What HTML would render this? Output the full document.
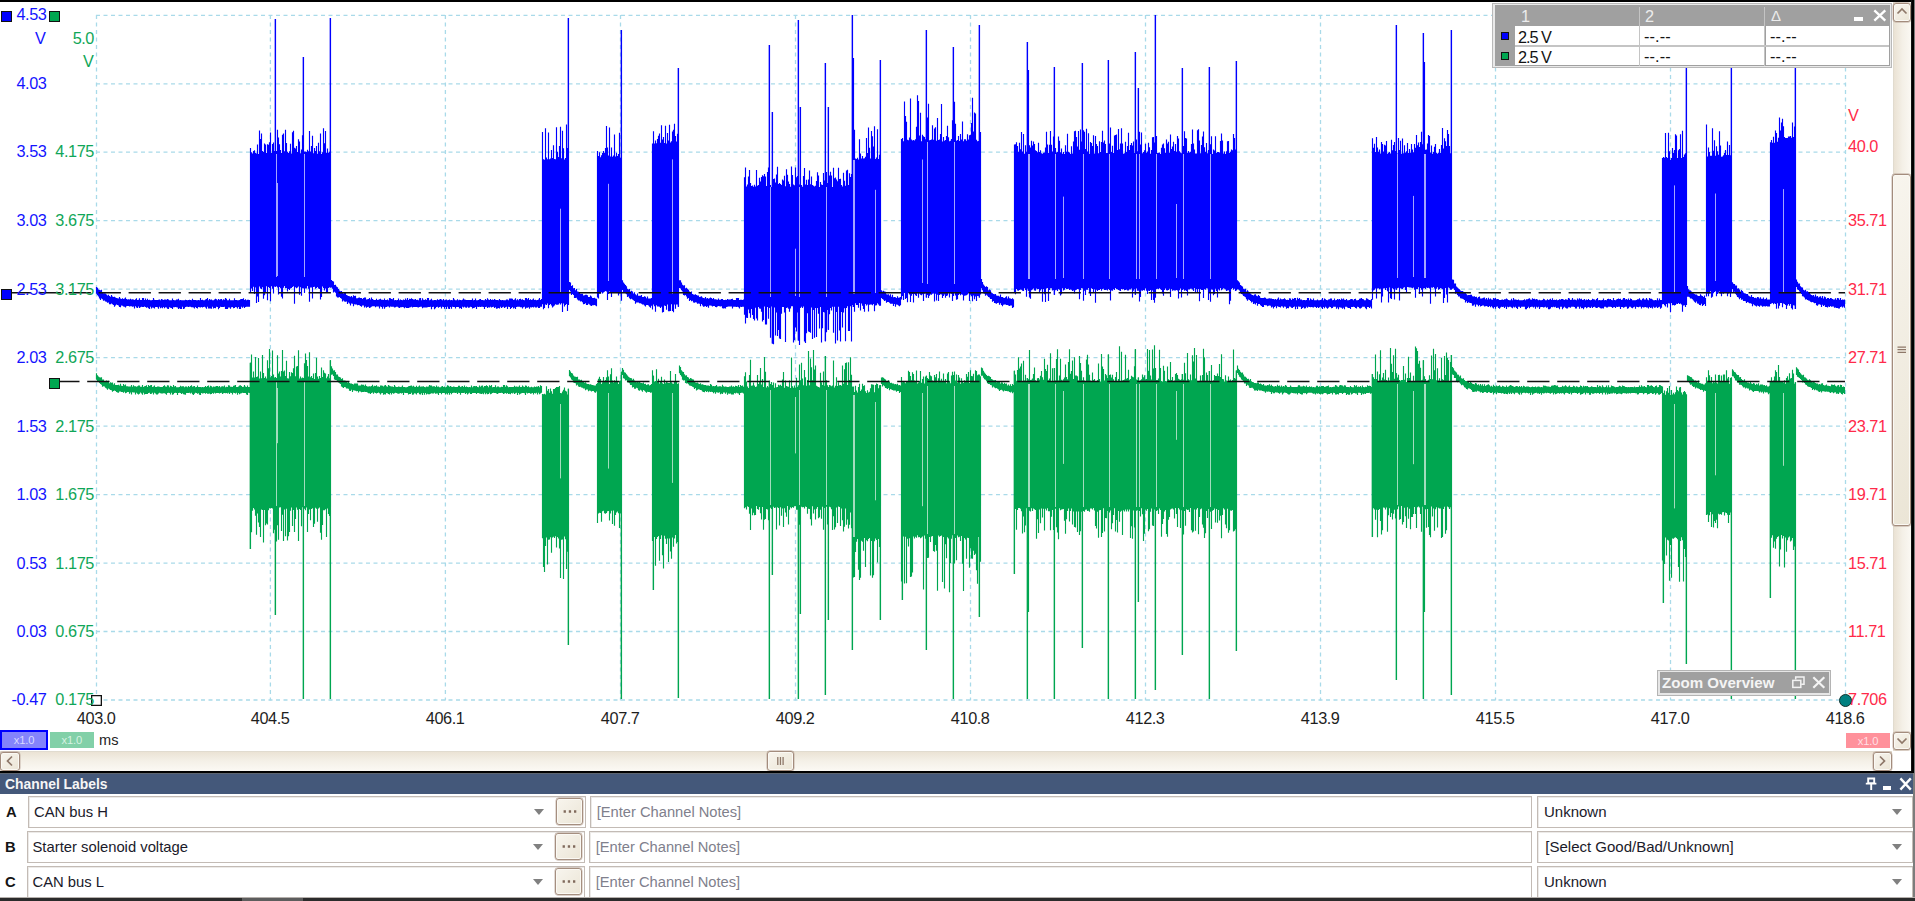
<!DOCTYPE html>
<html lang="en"><head><meta charset="utf-8"><title>PicoScope - CAN bus H / CAN bus L</title>
<style>
html,body{margin:0;padding:0;background:#fff;}
body{width:1915px;height:901px;position:relative;overflow:hidden;font-family:"Liberation Sans",sans-serif;font-size:15.5px;color:#1e1e1e;}
.a{position:absolute;}
.t{position:absolute;white-space:nowrap;line-height:18px;height:18px;font-size:16.3px;letter-spacing:-.42px;}
.bl{color:#1414ff;} .gr{color:#10a658;} .rd{color:#ff2a4a;}
.sb{position:absolute;box-sizing:border-box;border:1px solid #a38c7d;border-radius:3px;background:linear-gradient(135deg,#f8f5ee,#ebe5d6);box-shadow:inset 0 0 0 1px #fbf9f4,0 0 0 .4px #b9a699;}
.box{position:absolute;box-sizing:border-box;border:1px solid #c3bbb5;background:#fff;box-shadow:inset 1px 1px 0 #eceae8;}
.tri{position:absolute;width:0;height:0;border-left:5.5px solid transparent;border-right:5.5px solid transparent;border-top:6px solid #808080;}
.lbl{position:absolute;font-size:14.8px;line-height:20px;height:20px;white-space:nowrap;color:#1a1a2a;}
.note{color:#80808c;font-size:14.7px;}
.cell{position:absolute;background:#fff;height:18.5px;}
</style></head>
<body>
<svg class="a" style="left:0;top:0" width="1915" height="775" viewBox="0 0 1915 775">
<path d="M96 15.3H1845.5M96 83.8H1845.5M96 152.2H1845.5M96 220.7H1845.5M96 289.2H1845.5M96 357.7H1845.5M96 426.1H1845.5M96 494.6H1845.5M96 563.1H1845.5M96 631.5H1845.5M96 700.0H1845.5" stroke="#a9dae9" stroke-width="1.3" stroke-dasharray="4 3.5" fill="none"/>
<path d="M96.5 15V700.5M270.4 15V700.5M445.4 15V700.5M620.5 15V700.5M795.5 15V700.5M970.5 15V700.5M1145.5 15V700.5M1320.5 15V700.5M1495.5 15V700.5M1670.5 15V700.5M1845.5 15V700.5" stroke="#a9dae9" stroke-width="1.3" stroke-dasharray="4 3.5" fill="none"/>
<path d="M96.5 373.3V379.8M97.5 375.3V381.5M98.5 376.4V382.0M99.5 377.3V383.0M100.5 377.4V384.1M101.5 377.3V384.7M102.5 379.5V386.7M103.5 379.4V386.2M104.5 380.9V386.6M105.5 381.2V387.8M106.5 380.6V388.6M107.5 381.8V389.7M108.5 380.7V388.5M109.5 383.2V389.3M110.5 382.3V389.9M111.5 382.8V390.3M112.5 382.6V391.7M113.5 384.4V391.1M114.5 383.2V390.4M115.5 384.9V391.0M116.5 385.1V392.0M117.5 384.9V392.5M118.5 384.8V392.8M119.5 385.4V391.6M120.5 383.7V391.4M121.5 385.7V392.0M122.5 386.0V392.0M123.5 384.1V392.7M124.5 385.2V391.8M125.5 384.6V393.3M126.5 386.3V392.8M127.5 386.3V392.1M128.5 386.5V392.1M129.5 386.6V393.8M130.5 386.5V392.5M131.5 385.1V394.4M132.5 386.7V392.3M133.5 385.2V392.4M134.5 386.2V392.4M135.5 386.2V394.5M136.5 386.7V392.8M137.5 386.3V393.8M138.5 385.5V394.6M139.5 385.5V393.7M140.5 386.7V392.6M141.5 386.8V393.6M142.5 385.1V394.7M143.5 386.9V392.7M144.5 386.2V394.4M145.5 386.1V394.1M146.5 385.2V394.0M147.5 387.0V394.0M148.5 385.0V393.0M149.5 385.9V392.8M150.5 385.3V394.1M151.5 385.0V393.7M152.5 387.1V392.7M153.5 386.5V394.6M154.5 385.6V392.8M155.5 387.0V393.5M156.5 387.1V394.6M157.5 386.4V394.5M158.5 386.6V393.4M159.5 386.7V392.8M160.5 387.1V393.3M161.5 386.9V393.4M162.5 387.1V393.5M163.5 385.9V393.3M164.5 385.3V393.2M165.5 386.6V393.8M166.5 386.7V394.7M167.5 385.2V392.9M168.5 385.6V392.8M169.5 387.2V392.9M170.5 385.8V394.6M171.5 386.2V392.8M172.5 387.1V394.8M173.5 385.0V394.3M174.5 386.6V393.0M175.5 386.0V392.8M176.5 387.2V393.0M177.5 387.2V394.9M178.5 387.2V392.9M179.5 387.0V392.8M180.5 385.7V392.9M181.5 386.5V393.9M182.5 386.2V393.2M183.5 386.3V394.2M184.5 387.2V394.4M185.5 386.5V394.7M186.5 386.6V392.9M187.5 387.2V392.9M188.5 385.9V393.0M189.5 386.9V392.8M190.5 386.0V393.5M191.5 385.3V392.8M192.5 386.7V394.3M193.5 386.2V394.9M194.5 386.1V393.7M195.5 387.2V392.8M196.5 387.1V392.9M197.5 385.5V393.8M198.5 387.0V393.3M199.5 387.0V394.8M200.5 387.1V394.9M201.5 387.2V393.1M202.5 387.1V393.4M203.5 387.2V393.2M204.5 387.0V392.9M205.5 386.0V393.8M206.5 386.9V393.0M207.5 386.0V393.7M208.5 385.4V393.7M209.5 387.2V393.4M210.5 385.8V394.3M211.5 386.2V393.9M212.5 387.2V393.1M213.5 386.5V393.7M214.5 386.7V392.8M215.5 386.6V393.4M216.5 386.0V392.9M217.5 386.0V392.9M218.5 386.7V393.1M219.5 385.9V393.6M220.5 387.2V392.9M221.5 386.5V392.8M222.5 386.2V393.9M223.5 386.6V393.3M224.5 385.4V392.9M225.5 387.2V393.3M226.5 386.8V393.0M227.5 387.1V393.5M228.5 385.2V392.8M229.5 385.5V393.9M230.5 386.7V392.8M231.5 386.8V393.0M232.5 387.0V394.4M233.5 385.7V392.8M234.5 385.4V393.0M235.5 385.0V393.6M236.5 387.0V392.8M237.5 387.0V394.7M238.5 386.6V392.9M239.5 385.5V394.3M240.5 385.3V393.5M241.5 386.0V393.2M242.5 387.0V392.8M243.5 386.7V393.1M244.5 385.1V392.9M245.5 386.5V393.1M246.5 387.1V394.6M247.5 385.4V395.0M248.5 387.1V392.8M249.5 387.1V392.9M250.5 362.8V549.0M251.5 354.6V532.2M252.5 377.6V510.8M253.5 371.6V508.0M254.5 377.4V509.6M255.5 356.9V515.7M256.5 376.9V534.7M257.5 376.6V513.4M258.5 358.0V522.5M259.5 378.5V526.9M260.5 371.5V537.1M261.5 378.3V509.5M262.5 354.9V510.0M263.5 372.9V542.6M264.5 377.9V510.0M265.5 376.5V525.2M266.5 378.5V523.5M267.5 360.3V524.5M268.5 368.3V510.2M269.5 349.1V508.2M270.5 377.3V508.6M271.5 376.1V508.1M272.5 350.4V508.6M273.5 374.5V533.2M274.5 377.7V529.7M275.5 377.1V615.0M276.5 378.0V541.5M277.5 355.3V525.2M278.5 373.6V539.8M279.5 371.5V507.4M280.5 376.5V507.2M281.5 371.0V531.1M282.5 350.1V514.8M283.5 371.4V541.0M284.5 370.6V509.4M285.5 376.0V536.2M286.5 360.7V508.7M287.5 378.2V540.4M288.5 378.5V536.2M289.5 372.1V531.9M290.5 376.2V510.7M291.5 372.3V507.4M292.5 372.9V525.9M293.5 368.3V510.0M294.5 355.7V532.1M295.5 376.3V519.0M296.5 366.4V507.6M297.5 365.9V509.8M298.5 350.2V540.9M299.5 378.4V509.0M300.5 376.6V509.9M301.5 378.3V526.2M302.5 377.5V507.2M303.5 377.9V699.0M304.5 363.3V508.7M305.5 353.4V510.2M306.5 360.1V507.5M307.5 366.0V532.0M308.5 376.4V513.9M309.5 352.2V509.4M310.5 377.3V520.2M311.5 376.0V508.9M312.5 378.0V508.3M313.5 373.4V527.1M314.5 378.9V523.7M315.5 373.0V507.8M316.5 357.7V508.8M317.5 376.6V521.8M318.5 378.7V508.5M319.5 376.0V507.5M320.5 378.1V532.8M321.5 367.4V539.7M322.5 377.1V525.1M323.5 370.2V510.3M324.5 372.7V510.3M325.5 373.5V509.2M326.5 378.3V537.0M327.5 376.5V508.5M328.5 374.1V514.1M329.5 378.3V516.0M330.5 360.2V699.0M331.5 366.3V374.8M332.5 368.5V374.6M333.5 370.4V376.1M334.5 370.2V379.4M335.5 371.9V380.0M336.5 374.5V380.2M337.5 374.6V381.4M338.5 376.6V382.4M339.5 377.0V383.2M340.5 377.4V384.0M341.5 379.1V386.6M342.5 378.2V387.2M343.5 380.5V388.0M344.5 380.6V386.9M345.5 380.7V387.2M346.5 381.0V388.4M347.5 382.4V388.5M348.5 381.4V388.8M349.5 383.1V390.7M350.5 383.6V391.0M351.5 383.5V389.7M352.5 383.9V392.0M353.5 384.5V390.3M354.5 383.6V390.5M355.5 383.5V390.8M356.5 383.6V391.3M357.5 383.5V391.0M358.5 385.4V392.4M359.5 385.6V391.2M360.5 385.6V391.5M361.5 384.4V392.2M362.5 384.8V392.0M363.5 384.7V392.0M364.5 385.7V391.8M365.5 384.6V392.0M366.5 386.1V392.0M367.5 386.4V392.6M368.5 386.5V393.2M369.5 386.3V393.3M370.5 386.6V393.9M371.5 386.1V392.9M372.5 384.7V392.4M373.5 386.6V393.8M374.5 385.7V392.5M375.5 386.1V393.0M376.5 385.2V393.6M377.5 386.4V393.0M378.5 386.6V392.6M379.5 386.9V393.3M380.5 385.5V394.5M381.5 385.4V393.2M382.5 385.7V392.9M383.5 386.6V394.7M384.5 385.6V394.2M385.5 385.0V394.6M386.5 386.2V393.0M387.5 386.7V393.2M388.5 385.0V394.0M389.5 385.7V394.4M390.5 386.2V392.9M391.5 386.5V394.6M392.5 386.5V393.1M393.5 386.9V393.7M394.5 385.1V393.3M395.5 386.5V392.8M396.5 387.0V393.1M397.5 387.1V393.4M398.5 386.4V393.7M399.5 386.7V393.4M400.5 387.0V392.9M401.5 386.8V393.5M402.5 385.5V392.9M403.5 387.0V394.9M404.5 387.1V392.8M405.5 387.2V393.1M406.5 387.2V392.9M407.5 387.1V393.0M408.5 386.3V394.4M409.5 386.0V394.0M410.5 385.8V393.9M411.5 385.5V392.8M412.5 386.6V394.8M413.5 385.8V394.5M414.5 386.7V393.3M415.5 386.9V393.5M416.5 385.8V394.4M417.5 387.1V393.0M418.5 386.4V392.8M419.5 385.6V394.3M420.5 386.8V394.6M421.5 386.5V393.3M422.5 386.6V395.0M423.5 386.2V393.1M424.5 386.9V394.8M425.5 387.2V393.1M426.5 386.5V394.5M427.5 386.8V393.7M428.5 386.6V394.3M429.5 385.1V394.3M430.5 385.4V393.8M431.5 385.5V393.2M432.5 386.6V393.4M433.5 386.3V393.6M434.5 386.3V392.8M435.5 387.0V393.8M436.5 385.6V393.6M437.5 386.7V393.5M438.5 386.6V395.0M439.5 387.2V392.9M440.5 387.2V392.9M441.5 386.4V394.2M442.5 385.9V393.0M443.5 387.1V393.0M444.5 386.5V393.1M445.5 387.2V394.5M446.5 386.8V393.6M447.5 385.3V394.4M448.5 385.7V393.0M449.5 386.7V394.8M450.5 386.1V392.9M451.5 386.7V394.2M452.5 386.9V392.9M453.5 386.5V392.8M454.5 386.8V392.8M455.5 386.9V392.9M456.5 387.1V392.8M457.5 387.1V393.9M458.5 385.7V392.8M459.5 385.8V392.9M460.5 386.9V394.8M461.5 386.6V392.9M462.5 386.1V392.9M463.5 386.9V392.9M464.5 385.5V392.8M465.5 387.0V394.1M466.5 386.5V393.0M467.5 387.1V394.4M468.5 387.2V393.5M469.5 387.0V392.8M470.5 387.2V393.9M471.5 385.4V394.1M472.5 387.2V393.0M473.5 386.2V393.1M474.5 386.1V392.9M475.5 386.3V392.9M476.5 386.0V393.9M477.5 387.1V392.9M478.5 387.2V393.0M479.5 385.6V393.5M480.5 386.8V393.8M481.5 385.7V394.1M482.5 385.6V393.6M483.5 387.2V394.2M484.5 386.0V392.8M485.5 386.0V394.3M486.5 385.2V393.2M487.5 386.0V394.3M488.5 387.2V393.9M489.5 385.3V392.8M490.5 386.1V394.2M491.5 385.1V393.7M492.5 387.2V393.1M493.5 387.0V392.8M494.5 387.1V392.9M495.5 385.3V393.1M496.5 387.2V393.5M497.5 386.5V394.1M498.5 386.4V393.3M499.5 387.2V393.0M500.5 387.2V393.0M501.5 386.8V392.8M502.5 386.9V392.9M503.5 385.0V394.0M504.5 385.1V393.5M505.5 386.8V392.9M506.5 385.3V393.7M507.5 386.3V392.9M508.5 387.2V394.1M509.5 387.1V393.7M510.5 387.1V394.2M511.5 387.0V392.9M512.5 386.9V393.5M513.5 387.1V392.8M514.5 385.7V393.9M515.5 386.7V393.3M516.5 386.5V392.8M517.5 386.8V394.9M518.5 386.8V392.9M519.5 385.6V394.4M520.5 387.0V393.8M521.5 386.9V393.2M522.5 385.4V392.9M523.5 386.5V393.1M524.5 387.0V393.3M525.5 385.6V394.9M526.5 385.8V392.8M527.5 387.0V393.5M528.5 386.3V393.0M529.5 387.2V392.9M530.5 387.2V393.8M531.5 386.8V393.4M532.5 387.2V392.9M533.5 387.2V394.4M534.5 386.6V392.9M535.5 387.1V393.5M536.5 386.4V392.8M537.5 386.8V394.4M538.5 385.9V392.8M539.5 387.2V394.3M540.5 385.2V393.5M541.5 385.9V392.8M542.5 393.9V538.3M543.5 394.2V567.0M544.5 393.7V572.1M545.5 394.4V546.1M546.5 386.2V537.6M547.5 390.7V564.6M548.5 389.1V539.8M549.5 392.8V539.5M550.5 388.5V537.3M551.5 391.2V552.7M552.5 393.7V537.4M553.5 389.1V536.8M554.5 389.1V538.1M555.5 387.9V536.2M556.5 387.1V547.6M557.5 387.1V537.0M558.5 387.0V538.6M559.5 386.0V548.6M560.5 393.0V578.0M561.5 393.2V539.8M562.5 391.6V539.5M563.5 389.7V578.9M564.5 387.4V536.6M565.5 390.8V539.2M566.5 391.4V569.1M567.5 394.6V551.7M568.5 388.8V645.0M569.5 370.0V376.2M570.5 371.4V377.6M571.5 373.0V379.4M572.5 373.4V380.2M573.5 375.4V382.5M574.5 376.4V383.1M575.5 376.7V383.2M576.5 377.0V385.4M577.5 376.8V384.7M578.5 379.4V386.4M579.5 379.5V387.0M580.5 380.3V386.7M581.5 379.7V387.6M582.5 381.5V387.7M583.5 381.8V388.6M584.5 382.7V388.5M585.5 382.3V390.3M586.5 383.6V389.5M587.5 383.9V389.5M588.5 383.9V391.2M589.5 384.4V390.4M590.5 384.2V390.8M591.5 384.8V391.5M592.5 385.0V391.0M593.5 385.3V391.0M594.5 385.4V392.2M595.5 385.5V392.7M596.5 384.1V391.4M597.5 382.9V522.9M598.5 378.7V513.6M599.5 376.7V512.7M600.5 379.1V513.0M601.5 384.0V521.8M602.5 382.2V511.2M603.5 377.1V510.8M604.5 381.9V513.2M605.5 380.0V513.7M606.5 377.2V513.1M607.5 370.2V511.3M608.5 376.6V510.9M609.5 384.0V520.6M610.5 374.2V513.6M611.5 368.2V510.7M612.5 380.4V524.1M613.5 382.6V510.4M614.5 380.2V525.8M615.5 381.7V515.0M616.5 376.4V512.4M617.5 381.0V511.6M618.5 383.9V513.2M619.5 381.3V528.0M620.5 380.4V513.3M621.5 371.8V699.0M622.5 368.1V375.1M623.5 369.7V378.3M624.5 372.2V378.7M625.5 372.7V380.6M626.5 374.2V380.3M627.5 375.4V382.2M628.5 376.7V382.6M629.5 377.5V383.3M630.5 378.1V385.1M631.5 378.2V384.9M632.5 379.8V387.6M633.5 378.8V387.0M634.5 380.6V388.8M635.5 381.6V388.8M636.5 382.2V387.8M637.5 381.2V388.3M638.5 382.3V390.2M639.5 381.5V390.7M640.5 382.8V389.7M641.5 383.0V390.5M642.5 383.3V391.7M643.5 382.4V390.1M644.5 384.1V390.8M645.5 383.8V391.8M646.5 385.1V392.8M647.5 384.6V391.7M648.5 384.3V392.0M649.5 385.5V391.9M650.5 384.9V392.8M651.5 383.9V392.6M652.5 370.3V541.1M653.5 375.7V590.0M654.5 381.5V536.9M655.5 381.1V565.7M656.5 369.3V538.9M657.5 381.6V537.1M658.5 378.7V536.1M659.5 383.5V560.8M660.5 381.3V538.9M661.5 376.7V535.2M662.5 383.2V555.2M663.5 384.0V568.5M664.5 379.6V535.8M665.5 383.2V538.7M666.5 381.5V544.1M667.5 382.4V538.6M668.5 383.1V562.0M669.5 383.1V538.6M670.5 370.9V551.4M671.5 382.2V558.7M672.5 383.4V537.5M673.5 383.8V546.7M674.5 381.3V538.6M675.5 374.1V535.0M676.5 381.3V543.6M677.5 383.9V542.0M678.5 383.4V698.0M679.5 365.6V373.2M680.5 367.0V375.0M681.5 370.3V376.4M682.5 371.5V379.7M683.5 372.0V380.4M684.5 374.3V380.2M685.5 375.5V382.9M686.5 375.3V383.5M687.5 376.9V383.2M688.5 377.5V384.3M689.5 379.1V385.4M690.5 377.9V385.8M691.5 378.4V386.1M692.5 379.3V386.7M693.5 379.4V387.3M694.5 381.0V388.9M695.5 382.4V388.1M696.5 382.8V390.6M697.5 382.4V389.7M698.5 383.6V389.3M699.5 383.9V389.6M700.5 383.2V390.0M701.5 384.5V390.3M702.5 384.3V391.5M703.5 384.7V392.1M704.5 385.0V392.3M705.5 385.1V390.9M706.5 385.4V392.0M707.5 385.6V391.3M708.5 385.4V392.3M709.5 385.9V391.5M710.5 384.0V391.9M711.5 384.7V391.8M712.5 386.2V391.9M713.5 386.0V393.2M714.5 386.3V392.3M715.5 386.0V393.7M716.5 385.0V392.2M717.5 386.5V392.6M718.5 386.6V392.7M719.5 386.2V392.3M720.5 386.2V394.2M721.5 386.7V393.6M722.5 384.8V394.0M723.5 386.2V392.6M724.5 386.8V392.5M725.5 386.4V393.7M726.5 386.7V392.6M727.5 386.9V394.7M728.5 387.0V393.5M729.5 386.5V393.8M730.5 386.5V393.4M731.5 385.6V394.6M732.5 386.7V394.4M733.5 386.3V394.4M734.5 387.1V393.1M735.5 385.8V393.4M736.5 386.1V392.7M737.5 386.6V393.3M738.5 384.9V393.6M739.5 387.0V394.9M740.5 385.1V392.9M741.5 386.1V392.7M742.5 385.6V392.7M743.5 386.7V393.4M744.5 376.3V508.3M745.5 372.2V507.2M746.5 381.4V509.6M747.5 386.6V506.3M748.5 387.9V506.9M749.5 374.9V513.8M750.5 359.8V529.9M751.5 385.8V508.4M752.5 385.5V515.3M753.5 382.6V512.7M754.5 385.6V515.3M755.5 387.1V515.0M756.5 386.6V506.1M757.5 374.9V509.1M758.5 384.1V509.7M759.5 381.8V507.0M760.5 367.9V513.3M761.5 384.6V519.6M762.5 379.0V507.0M763.5 387.1V529.7M764.5 356.9V519.7M765.5 371.7V519.1M766.5 387.4V508.9M767.5 386.0V509.4M768.5 387.3V520.3M769.5 380.8V699.0M770.5 384.1V507.7M771.5 382.1V508.9M772.5 385.3V575.0M773.5 382.4V506.7M774.5 387.7V508.0M775.5 383.2V507.4M776.5 387.2V529.6M777.5 386.9V507.3M778.5 384.7V507.9M779.5 385.4V525.5M780.5 384.7V507.2M781.5 386.0V515.8M782.5 379.5V508.6M783.5 372.0V527.1M784.5 387.7V508.2M785.5 380.4V512.6M786.5 386.1V516.8M787.5 386.6V506.1M788.5 386.7V524.5M789.5 380.5V509.8M790.5 388.0V507.3M791.5 357.6V508.3M792.5 386.3V507.0M793.5 387.8V507.7M794.5 385.4V506.2M795.5 387.6V506.1M796.5 377.8V509.7M797.5 386.9V509.7M798.5 385.5V699.0M799.5 364.6V524.8M800.5 380.4V614.0M801.5 362.8V506.8M802.5 378.4V507.3M803.5 385.3V507.1M804.5 370.1V508.6M805.5 377.2V506.6M806.5 385.7V507.0M807.5 379.9V513.8M808.5 351.1V508.8M809.5 385.3V508.9M810.5 358.5V519.3M811.5 367.2V525.4M812.5 380.3V506.2M813.5 349.9V513.6M814.5 369.6V509.5M815.5 365.5V519.4M816.5 385.8V508.8M817.5 386.4V506.9M818.5 386.9V518.3M819.5 387.4V517.3M820.5 372.7V509.7M821.5 382.2V518.8M822.5 385.0V506.8M823.5 371.5V529.7M824.5 385.8V507.9M825.5 356.0V695.0M826.5 380.2V506.7M827.5 385.3V524.6M828.5 387.0V620.0M829.5 385.1V506.7M830.5 385.5V507.2M831.5 386.3V509.3M832.5 385.5V529.9M833.5 360.4V516.3M834.5 387.4V529.4M835.5 385.8V527.2M836.5 377.3V507.4M837.5 386.1V523.1M838.5 382.3V506.5M839.5 385.2V506.9M840.5 385.1V526.1M841.5 385.7V508.6M842.5 365.6V520.2M843.5 383.7V531.6M844.5 369.2V526.8M845.5 363.0V508.5M846.5 362.4V524.8M847.5 385.1V519.4M848.5 362.3V528.4M849.5 380.0V524.8M850.5 357.3V512.6M851.5 374.8V528.2M852.5 386.7V650.0M853.5 386.5V577.4M854.5 391.9V577.0M855.5 385.8V552.0M856.5 390.4V541.8M857.5 392.5V539.1M858.5 387.0V569.7M859.5 383.8V580.0M860.5 391.1V577.8M861.5 389.5V540.8M862.5 383.8V541.7M863.5 386.0V550.7M864.5 385.3V538.1M865.5 391.2V567.1M866.5 392.9V540.3M867.5 390.3V541.2M868.5 392.5V539.0M869.5 391.7V538.1M870.5 388.2V575.5M871.5 384.3V541.1M872.5 384.6V577.7M873.5 384.7V575.2M874.5 392.3V541.3M875.5 385.1V538.5M876.5 383.4V539.9M877.5 383.9V562.6M878.5 388.3V539.1M879.5 385.3V546.9M880.5 384.9V620.0M881.5 377.6V384.0M882.5 377.2V386.4M883.5 377.7V385.3M884.5 378.7V386.3M885.5 379.4V388.0M886.5 381.4V388.3M887.5 381.9V389.0M888.5 380.3V388.1M889.5 382.1V390.2M890.5 382.9V388.9M891.5 382.8V389.6M892.5 383.6V389.9M893.5 383.4V390.4M894.5 384.2V390.6M895.5 384.0V390.4M896.5 384.6V391.8M897.5 383.8V391.1M898.5 385.3V390.9M899.5 385.1V392.9M900.5 385.6V391.9M901.5 377.1V581.6M902.5 382.6V600.0M903.5 381.9V536.4M904.5 382.2V583.4M905.5 383.3V536.8M906.5 382.0V583.2M907.5 381.3V538.8M908.5 370.8V546.5M909.5 371.9V538.2M910.5 375.9V577.0M911.5 380.2V576.4M912.5 372.2V572.6M913.5 374.0V536.6M914.5 380.5V538.4M915.5 381.0V536.8M916.5 370.6V537.7M917.5 383.5V535.2M918.5 382.4V537.3M919.5 381.1V536.9M920.5 371.1V538.2M921.5 382.7V537.6M922.5 379.1V536.5M923.5 376.6V589.4M924.5 383.6V535.5M925.5 376.8V538.7M926.5 375.8V650.0M927.5 377.9V558.1M928.5 379.0V557.8M929.5 372.0V537.1M930.5 375.6V541.9M931.5 376.2V536.4M932.5 380.5V536.0M933.5 382.1V551.1M934.5 375.1V551.8M935.5 377.3V544.9M936.5 373.9V550.7M937.5 382.2V590.7M938.5 378.2V535.4M939.5 371.5V536.8M940.5 380.7V536.1M941.5 378.7V535.4M942.5 381.7V582.0M943.5 373.5V536.9M944.5 381.0V588.6M945.5 379.0V544.3M946.5 383.2V558.3M947.5 373.5V537.2M948.5 372.1V538.5M949.5 381.3V592.3M950.5 383.2V563.3M951.5 375.5V538.8M952.5 371.7V535.3M953.5 374.9V699.0M954.5 371.4V563.4M955.5 380.6V538.0M956.5 374.4V560.3M957.5 382.4V535.4M958.5 375.1V537.2M959.5 377.4V536.7M960.5 383.8V541.0M961.5 378.3V536.1M962.5 381.3V563.7M963.5 383.0V590.9M964.5 380.2V537.9M965.5 381.7V539.6M966.5 374.1V558.7M967.5 376.8V537.8M968.5 371.9V537.9M969.5 382.9V567.7M970.5 370.3V548.3M971.5 375.9V558.5M972.5 376.2V558.8M973.5 373.8V550.7M974.5 381.3V555.0M975.5 370.3V553.7M976.5 371.1V570.3M977.5 375.2V583.7M978.5 374.4V537.0M979.5 374.8V617.0M980.5 376.2V561.7M981.5 367.5V375.8M982.5 368.3V375.7M983.5 370.7V377.7M984.5 372.4V379.2M985.5 373.7V379.8M986.5 375.0V381.3M987.5 376.1V383.2M988.5 375.8V383.9M989.5 376.3V383.9M990.5 377.1V384.9M991.5 379.0V385.2M992.5 379.5V387.4M993.5 380.3V386.4M994.5 380.2V387.5M995.5 379.9V388.3M996.5 382.3V388.1M997.5 382.0V388.8M998.5 382.0V389.4M999.5 381.6V391.0M1000.5 383.5V389.9M1001.5 382.3V389.8M1002.5 382.6V390.4M1003.5 384.0V391.6M1004.5 382.7V390.5M1005.5 383.8V391.1M1006.5 383.5V391.0M1007.5 385.4V391.3M1008.5 384.4V391.2M1009.5 385.7V392.0M1010.5 384.3V392.5M1011.5 386.0V391.7M1012.5 384.0V393.3M1013.5 384.9V392.3M1014.5 370.7V574.0M1015.5 374.6V509.0M1016.5 380.7V529.7M1017.5 370.0V510.0M1018.5 357.2V508.1M1019.5 368.4V508.1M1020.5 366.5V508.8M1021.5 363.5V511.3M1022.5 380.9V533.4M1023.5 360.8V516.6M1024.5 380.6V532.3M1025.5 374.8V525.5M1026.5 381.6V508.2M1027.5 378.0V699.0M1028.5 379.5V612.0M1029.5 349.9V510.7M1030.5 380.0V511.6M1031.5 379.8V508.2M1032.5 378.4V511.1M1033.5 374.0V508.6M1034.5 367.5V509.3M1035.5 380.2V510.1M1036.5 381.0V538.7M1037.5 378.2V519.3M1038.5 378.0V533.1M1039.5 379.6V509.4M1040.5 375.7V523.2M1041.5 371.0V508.5M1042.5 377.3V517.5M1043.5 379.8V508.8M1044.5 358.8V530.5M1045.5 368.9V508.7M1046.5 371.0V510.6M1047.5 364.8V508.3M1048.5 380.2V511.3M1049.5 378.6V511.2M1050.5 353.3V530.2M1051.5 381.8V516.7M1052.5 368.2V510.1M1053.5 380.9V530.0M1054.5 368.0V699.0M1055.5 380.4V508.7M1056.5 359.1V527.3M1057.5 349.2V532.6M1058.5 380.5V539.2M1059.5 375.5V508.3M1060.5 358.7V510.2M1061.5 379.7V509.5M1062.5 380.5V509.2M1063.5 379.2V509.0M1064.5 377.5V520.8M1065.5 364.4V533.7M1066.5 377.1V519.3M1067.5 379.2V511.1M1068.5 362.1V508.5M1069.5 349.3V521.4M1070.5 373.8V511.1M1071.5 371.1V508.5M1072.5 360.6V524.4M1073.5 379.1V511.4M1074.5 357.3V527.1M1075.5 375.5V527.6M1076.5 375.6V511.5M1077.5 376.3V532.1M1078.5 380.4V511.6M1079.5 356.0V535.1M1080.5 363.0V531.3M1081.5 370.8V511.7M1082.5 380.6V648.0M1083.5 377.3V511.1M1084.5 380.6V511.7M1085.5 381.2V509.8M1086.5 359.4V509.6M1087.5 354.7V510.9M1088.5 364.6V510.7M1089.5 374.7V511.7M1090.5 380.4V508.4M1091.5 381.9V508.4M1092.5 372.4V509.6M1093.5 380.1V508.1M1094.5 379.1V510.6M1095.5 381.9V525.9M1096.5 381.7V528.5M1097.5 380.1V511.8M1098.5 363.4V537.7M1099.5 379.0V510.3M1100.5 381.4V510.0M1101.5 354.1V536.9M1102.5 366.5V532.9M1103.5 368.9V508.3M1104.5 380.6V531.5M1105.5 373.9V517.9M1106.5 375.3V518.2M1107.5 377.9V511.1M1108.5 354.6V699.0M1109.5 375.1V512.5M1110.5 374.6V510.6M1111.5 377.6V529.2M1112.5 374.7V523.3M1113.5 379.3V515.1M1114.5 381.3V508.3M1115.5 376.9V531.5M1116.5 372.0V520.1M1117.5 381.2V532.6M1118.5 379.0V510.9M1119.5 346.2V521.8M1120.5 381.1V511.7M1121.5 351.8V510.7M1122.5 380.5V535.1M1123.5 380.1V510.2M1124.5 379.4V511.5M1125.5 354.8V509.5M1126.5 378.8V511.6M1127.5 377.9V509.6M1128.5 369.7V511.4M1129.5 379.8V509.4M1130.5 379.0V538.1M1131.5 375.8V526.2M1132.5 376.7V538.7M1133.5 377.3V510.6M1134.5 366.2V527.6M1135.5 349.2V699.0M1136.5 379.5V510.8M1137.5 379.9V510.2M1138.5 377.5V602.0M1139.5 380.7V511.0M1140.5 380.3V516.5M1141.5 379.2V508.3M1142.5 374.4V514.3M1143.5 377.3V541.1M1144.5 375.3V533.7M1145.5 379.3V509.7M1146.5 379.1V510.7M1147.5 348.9V509.1M1148.5 370.8V531.3M1149.5 349.9V529.3M1150.5 375.6V511.8M1151.5 379.6V508.4M1152.5 349.5V525.6M1153.5 368.4V525.9M1154.5 345.3V509.6M1155.5 367.9V690.0M1156.5 380.1V511.1M1157.5 379.9V510.3M1158.5 378.6V513.9M1159.5 349.7V508.5M1160.5 368.1V510.1M1161.5 381.1V536.8M1162.5 381.6V523.9M1163.5 365.7V519.0M1164.5 370.8V511.5M1165.5 381.1V509.9M1166.5 381.3V533.9M1167.5 366.5V536.8M1168.5 379.2V519.7M1169.5 380.3V516.9M1170.5 362.1V509.4M1171.5 380.1V508.7M1172.5 377.1V508.6M1173.5 381.5V509.5M1174.5 380.4V518.6M1175.5 374.1V508.0M1176.5 373.1V513.9M1177.5 375.1V527.0M1178.5 378.7V508.1M1179.5 379.6V509.5M1180.5 380.0V527.9M1181.5 379.2V510.2M1182.5 374.1V655.0M1183.5 379.8V534.4M1184.5 362.8V511.0M1185.5 373.3V525.8M1186.5 380.6V509.3M1187.5 353.1V510.1M1188.5 379.2V509.7M1189.5 380.3V511.9M1190.5 374.4V508.1M1191.5 380.2V530.2M1192.5 355.3V532.5M1193.5 361.4V531.6M1194.5 348.1V509.5M1195.5 378.4V530.7M1196.5 355.0V509.5M1197.5 380.7V508.1M1198.5 381.5V534.2M1199.5 380.7V517.0M1200.5 375.6V509.2M1201.5 380.8V508.5M1202.5 375.1V524.6M1203.5 348.7V527.7M1204.5 357.2V538.0M1205.5 380.7V533.3M1206.5 372.4V510.9M1207.5 374.9V518.1M1208.5 381.9V509.1M1209.5 371.0V699.0M1210.5 381.9V511.7M1211.5 365.0V529.0M1212.5 381.0V510.7M1213.5 380.2V510.1M1214.5 375.1V508.5M1215.5 376.1V522.5M1216.5 376.1V509.1M1217.5 373.4V522.8M1218.5 375.9V509.9M1219.5 364.0V520.4M1220.5 376.9V515.8M1221.5 354.3V538.2M1222.5 379.1V514.9M1223.5 379.2V508.3M1224.5 381.4V509.5M1225.5 375.3V524.5M1226.5 380.5V528.3M1227.5 381.8V508.8M1228.5 376.6V532.7M1229.5 380.4V530.2M1230.5 379.6V510.4M1231.5 381.5V510.7M1232.5 379.9V510.0M1233.5 349.5V531.4M1234.5 378.1V530.8M1235.5 378.8V529.3M1236.5 370.6V651.0M1237.5 365.4V373.1M1238.5 368.7V374.8M1239.5 370.1V376.8M1240.5 371.8V377.6M1241.5 372.7V379.4M1242.5 372.4V380.2M1243.5 374.5V381.5M1244.5 376.5V383.6M1245.5 376.8V383.6M1246.5 377.8V386.1M1247.5 379.0V384.8M1248.5 378.8V385.5M1249.5 380.5V387.7M1250.5 379.0V388.0M1251.5 381.3V387.7M1252.5 381.9V387.8M1253.5 382.2V388.8M1254.5 382.9V390.5M1255.5 383.1V390.4M1256.5 383.3V390.3M1257.5 382.6V391.1M1258.5 382.4V389.8M1259.5 383.9V390.5M1260.5 383.4V390.4M1261.5 384.3V390.5M1262.5 385.0V390.9M1263.5 383.9V391.2M1264.5 385.5V391.4M1265.5 385.6V392.8M1266.5 385.8V391.4M1267.5 384.9V391.7M1268.5 385.3V391.6M1269.5 384.2V391.8M1270.5 385.8V392.0M1271.5 384.7V394.0M1272.5 386.1V392.2M1273.5 386.4V393.3M1274.5 386.4V393.2M1275.5 386.1V392.2M1276.5 386.6V392.6M1277.5 384.8V392.4M1278.5 386.0V393.1M1279.5 385.5V393.7M1280.5 386.8V392.8M1281.5 385.5V392.5M1282.5 386.8V394.5M1283.5 386.1V393.2M1284.5 386.6V392.6M1285.5 385.1V392.7M1286.5 385.8V393.0M1287.5 386.9V393.7M1288.5 387.0V394.4M1289.5 387.0V394.5M1290.5 385.6V393.4M1291.5 386.7V392.7M1292.5 386.9V393.1M1293.5 386.9V393.3M1294.5 386.9V393.2M1295.5 387.1V393.6M1296.5 387.1V393.3M1297.5 386.8V394.5M1298.5 385.3V392.9M1299.5 385.3V393.3M1300.5 386.6V394.0M1301.5 386.5V394.5M1302.5 386.4V394.5M1303.5 385.7V392.9M1304.5 386.2V393.3M1305.5 386.8V392.9M1306.5 385.6V394.2M1307.5 387.1V393.2M1308.5 386.9V392.8M1309.5 386.3V392.8M1310.5 387.1V392.8M1311.5 386.6V392.8M1312.5 387.2V393.3M1313.5 387.1V393.7M1314.5 387.2V393.4M1315.5 387.2V394.5M1316.5 385.8V393.2M1317.5 385.7V393.8M1318.5 387.1V393.3M1319.5 386.2V394.0M1320.5 386.7V394.6M1321.5 385.9V393.7M1322.5 386.0V394.2M1323.5 386.1V393.5M1324.5 387.0V392.9M1325.5 386.7V393.0M1326.5 386.3V393.6M1327.5 386.1V394.6M1328.5 385.5V394.0M1329.5 387.2V393.9M1330.5 387.1V393.2M1331.5 387.2V392.9M1332.5 387.1V394.5M1333.5 386.8V392.8M1334.5 386.8V393.1M1335.5 385.0V394.4M1336.5 385.4V394.4M1337.5 386.6V393.9M1338.5 387.1V394.6M1339.5 385.6V393.0M1340.5 385.1V392.9M1341.5 385.3V393.0M1342.5 385.5V393.9M1343.5 386.5V392.9M1344.5 385.2V392.8M1345.5 385.6V392.9M1346.5 386.9V394.9M1347.5 387.0V394.1M1348.5 387.1V394.8M1349.5 387.2V394.7M1350.5 386.0V392.8M1351.5 387.1V394.5M1352.5 387.2V393.7M1353.5 387.2V392.9M1354.5 385.1V393.0M1355.5 386.3V393.6M1356.5 385.3V393.4M1357.5 387.1V394.9M1358.5 386.6V392.8M1359.5 387.0V392.8M1360.5 385.9V392.9M1361.5 387.2V394.9M1362.5 385.5V393.6M1363.5 387.1V394.2M1364.5 387.2V393.5M1365.5 386.8V394.1M1366.5 387.1V393.1M1367.5 385.3V393.0M1368.5 386.0V393.0M1369.5 385.7V392.8M1370.5 385.9V393.8M1371.5 387.1V393.3M1372.5 373.9V537.0M1373.5 377.3V508.3M1374.5 379.1V509.5M1375.5 354.4V519.7M1376.5 379.0V509.7M1377.5 371.6V537.3M1378.5 381.2V510.0M1379.5 374.3V509.1M1380.5 350.3V520.9M1381.5 380.3V534.4M1382.5 377.6V530.3M1383.5 372.9V507.6M1384.5 379.5V507.7M1385.5 369.7V509.5M1386.5 379.9V507.4M1387.5 380.7V531.8M1388.5 377.6V515.2M1389.5 380.6V508.2M1390.5 347.9V517.1M1391.5 363.7V513.1M1392.5 372.1V519.5M1393.5 355.2V513.7M1394.5 378.8V509.8M1395.5 348.8V518.4M1396.5 373.2V680.0M1397.5 377.4V509.2M1398.5 374.8V506.6M1399.5 380.1V519.7M1400.5 380.7V519.1M1401.5 379.9V506.1M1402.5 379.9V524.4M1403.5 366.0V522.1M1404.5 379.7V507.8M1405.5 373.5V516.2M1406.5 381.9V528.1M1407.5 378.1V507.3M1408.5 356.7V518.7M1409.5 377.9V508.8M1410.5 372.6V529.2M1411.5 381.4V516.9M1412.5 381.7V517.1M1413.5 375.7V514.1M1414.5 381.5V506.9M1415.5 346.4V514.1M1416.5 348.2V528.1M1417.5 351.0V507.3M1418.5 363.7V506.5M1419.5 360.7V507.6M1420.5 367.8V514.0M1421.5 380.2V531.8M1422.5 379.7V506.8M1423.5 360.2V699.0M1424.5 376.4V612.0M1425.5 379.0V509.2M1426.5 381.1V527.8M1427.5 380.8V509.1M1428.5 379.7V526.9M1429.5 375.3V535.1M1430.5 379.1V537.2M1431.5 355.5V506.6M1432.5 379.2V516.5M1433.5 348.7V508.6M1434.5 370.3V530.8M1435.5 354.1V509.2M1436.5 380.2V507.3M1437.5 368.2V527.5M1438.5 380.6V507.8M1439.5 378.3V508.5M1440.5 380.9V508.6M1441.5 357.9V537.9M1442.5 379.3V537.0M1443.5 380.0V508.9M1444.5 356.0V506.8M1445.5 374.9V533.8M1446.5 352.4V530.2M1447.5 358.1V506.4M1448.5 359.9V507.2M1449.5 381.6V508.9M1450.5 361.9V507.3M1451.5 355.1V695.0M1452.5 367.1V374.6M1453.5 368.3V375.1M1454.5 370.4V378.1M1455.5 371.4V378.1M1456.5 372.6V381.1M1457.5 374.5V382.2M1458.5 374.7V381.3M1459.5 376.5V382.6M1460.5 375.5V383.8M1461.5 378.3V385.2M1462.5 378.8V384.8M1463.5 378.2V385.5M1464.5 379.9V387.2M1465.5 381.0V387.8M1466.5 381.1V389.1M1467.5 381.4V389.4M1468.5 380.9V388.2M1469.5 382.9V388.6M1470.5 381.5V389.0M1471.5 382.7V389.9M1472.5 383.8V391.7M1473.5 384.1V392.0M1474.5 384.4V391.8M1475.5 383.0V391.6M1476.5 383.4V391.7M1477.5 385.1V390.8M1478.5 384.3V391.2M1479.5 385.4V391.5M1480.5 384.1V392.4M1481.5 385.5V392.0M1482.5 384.3V392.9M1483.5 385.9V392.8M1484.5 384.2V392.1M1485.5 386.0V392.1M1486.5 385.2V392.7M1487.5 384.7V392.9M1488.5 384.3V392.0M1489.5 385.2V392.3M1490.5 386.6V393.0M1491.5 385.7V393.1M1492.5 386.7V392.3M1493.5 384.7V394.5M1494.5 386.1V393.0M1495.5 386.4V392.5M1496.5 385.4V394.3M1497.5 386.2V392.5M1498.5 385.9V393.0M1499.5 385.3V393.0M1500.5 386.6V392.9M1501.5 386.9V393.5M1502.5 385.7V393.1M1503.5 386.3V393.6M1504.5 386.7V393.9M1505.5 387.0V393.5M1506.5 385.6V394.1M1507.5 386.9V394.3M1508.5 386.4V392.7M1509.5 385.7V394.0M1510.5 385.0V392.8M1511.5 385.4V393.9M1512.5 386.0V392.7M1513.5 386.6V393.3M1514.5 387.1V394.3M1515.5 386.6V392.8M1516.5 385.9V392.8M1517.5 386.3V392.8M1518.5 387.1V393.7M1519.5 386.1V394.8M1520.5 387.1V392.8M1521.5 386.0V394.6M1522.5 387.2V393.1M1523.5 385.7V392.8M1524.5 386.2V392.8M1525.5 387.0V393.2M1526.5 386.5V392.8M1527.5 386.4V393.1M1528.5 386.5V393.4M1529.5 387.1V393.1M1530.5 387.2V395.0M1531.5 387.1V392.8M1532.5 386.5V394.8M1533.5 387.0V393.8M1534.5 387.1V393.2M1535.5 386.4V392.9M1536.5 387.2V392.8M1537.5 386.7V393.5M1538.5 386.4V393.2M1539.5 386.7V394.0M1540.5 387.2V392.9M1541.5 387.1V394.7M1542.5 387.2V393.1M1543.5 385.4V393.6M1544.5 385.7V393.2M1545.5 385.8V392.8M1546.5 386.2V393.3M1547.5 386.4V392.8M1548.5 386.5V393.1M1549.5 386.7V393.2M1550.5 387.1V393.8M1551.5 385.8V393.1M1552.5 385.5V392.8M1553.5 385.6V394.5M1554.5 385.1V393.1M1555.5 385.3V394.2M1556.5 385.7V393.8M1557.5 385.5V393.3M1558.5 387.1V392.9M1559.5 387.2V393.8M1560.5 387.1V393.0M1561.5 386.9V393.6M1562.5 385.7V392.9M1563.5 386.5V393.6M1564.5 386.2V394.5M1565.5 385.2V392.9M1566.5 386.3V392.8M1567.5 387.1V393.1M1568.5 386.5V393.6M1569.5 385.4V393.9M1570.5 387.0V392.8M1571.5 387.0V394.4M1572.5 387.1V393.1M1573.5 385.8V392.9M1574.5 386.3V392.8M1575.5 387.2V392.9M1576.5 386.2V392.9M1577.5 386.7V394.0M1578.5 387.2V392.9M1579.5 387.0V392.8M1580.5 385.4V394.7M1581.5 385.9V394.3M1582.5 387.2V393.9M1583.5 385.8V393.3M1584.5 386.4V392.8M1585.5 386.1V394.6M1586.5 386.3V392.8M1587.5 385.9V393.2M1588.5 387.0V392.9M1589.5 387.2V394.7M1590.5 386.9V394.7M1591.5 386.2V393.1M1592.5 386.8V393.8M1593.5 387.1V393.7M1594.5 387.1V393.2M1595.5 386.9V393.0M1596.5 387.2V393.6M1597.5 385.1V392.9M1598.5 387.1V392.9M1599.5 385.8V394.1M1600.5 386.3V393.0M1601.5 387.2V392.9M1602.5 385.2V394.6M1603.5 386.7V392.8M1604.5 387.2V392.8M1605.5 387.0V394.4M1606.5 385.6V392.8M1607.5 387.2V394.5M1608.5 385.2V393.5M1609.5 387.2V393.9M1610.5 387.2V393.5M1611.5 385.5V393.5M1612.5 386.1V393.5M1613.5 386.3V392.8M1614.5 386.8V393.4M1615.5 387.2V392.9M1616.5 387.0V394.2M1617.5 387.1V394.0M1618.5 386.8V393.5M1619.5 385.7V393.6M1620.5 386.2V393.8M1621.5 386.9V394.2M1622.5 385.4V393.4M1623.5 386.0V393.1M1624.5 386.2V393.2M1625.5 386.9V393.2M1626.5 387.1V393.7M1627.5 387.2V393.2M1628.5 386.9V393.4M1629.5 387.2V392.9M1630.5 387.0V393.5M1631.5 387.0V393.1M1632.5 386.9V393.0M1633.5 387.2V393.0M1634.5 386.6V393.0M1635.5 387.2V393.2M1636.5 387.0V393.2M1637.5 386.9V394.6M1638.5 387.1V394.2M1639.5 385.6V393.1M1640.5 387.1V392.9M1641.5 385.2V393.0M1642.5 386.5V392.9M1643.5 386.4V394.2M1644.5 386.1V393.3M1645.5 387.1V392.9M1646.5 387.2V392.9M1647.5 385.0V394.6M1648.5 385.1V394.0M1649.5 386.3V393.8M1650.5 385.7V393.1M1651.5 385.2V393.0M1652.5 385.9V393.9M1653.5 387.0V393.7M1654.5 387.2V392.9M1655.5 386.1V394.8M1656.5 385.6V393.6M1657.5 387.2V393.1M1658.5 387.0V394.4M1659.5 385.0V394.8M1660.5 385.2V394.0M1661.5 385.9V393.1M1662.5 386.5V560.6M1663.5 393.3V603.0M1664.5 390.5V564.1M1665.5 394.8V537.4M1666.5 391.2V555.6M1667.5 388.1V539.7M1668.5 392.7V540.4M1669.5 385.9V580.7M1670.5 394.7V545.0M1671.5 389.9V577.8M1672.5 394.4V538.5M1673.5 392.8V538.8M1674.5 394.2V537.8M1675.5 392.2V537.3M1676.5 386.4V538.0M1677.5 389.9V539.2M1678.5 391.3V566.9M1679.5 387.4V581.7M1680.5 386.9V540.9M1681.5 392.4V537.2M1682.5 394.6V540.3M1683.5 391.9V581.6M1684.5 391.0V548.9M1685.5 392.2V557.0M1686.5 394.6V664.0M1687.5 375.2V381.2M1688.5 375.7V381.9M1689.5 376.3V383.2M1690.5 377.0V384.8M1691.5 377.2V384.5M1692.5 378.8V386.0M1693.5 379.5V386.9M1694.5 380.7V386.8M1695.5 380.6V388.5M1696.5 381.6V387.5M1697.5 382.4V388.3M1698.5 380.6V388.4M1699.5 383.0V389.0M1700.5 383.2V390.1M1701.5 383.8V389.7M1702.5 383.7V390.1M1703.5 384.4V391.8M1704.5 384.6V390.5M1705.5 383.2V391.1M1706.5 377.3V515.1M1707.5 382.1V514.6M1708.5 370.3V521.9M1709.5 375.3V515.2M1710.5 382.0V512.1M1711.5 377.1V527.1M1712.5 383.2V514.2M1713.5 382.0V527.4M1714.5 382.5V521.0M1715.5 374.6V523.0M1716.5 382.4V519.7M1717.5 383.6V528.2M1718.5 375.1V513.8M1719.5 374.7V514.4M1720.5 381.6V514.0M1721.5 375.4V514.8M1722.5 382.1V512.3M1723.5 374.4V512.1M1724.5 374.6V515.5M1725.5 381.5V512.5M1726.5 370.3V513.0M1727.5 378.5V514.7M1728.5 377.0V523.0M1729.5 383.7V514.9M1730.5 378.0V512.6M1731.5 377.5V699.0M1732.5 369.2V376.3M1733.5 370.5V376.4M1734.5 371.9V378.2M1735.5 372.5V380.5M1736.5 374.3V380.8M1737.5 375.1V382.4M1738.5 375.0V382.8M1739.5 377.2V384.8M1740.5 376.9V384.8M1741.5 379.1V384.9M1742.5 379.9V386.2M1743.5 380.6V387.5M1744.5 379.3V387.3M1745.5 381.5V388.5M1746.5 381.1V387.8M1747.5 382.5V388.4M1748.5 382.6V388.6M1749.5 383.3V390.4M1750.5 381.9V389.7M1751.5 383.4V390.2M1752.5 383.9V391.3M1753.5 383.0V392.0M1754.5 383.5V390.9M1755.5 384.9V391.1M1756.5 383.8V391.1M1757.5 384.4V391.1M1758.5 383.3V391.3M1759.5 385.5V392.5M1760.5 384.6V391.6M1761.5 384.6V392.4M1762.5 384.6V391.7M1763.5 385.2V393.4M1764.5 385.1V391.8M1765.5 385.9V392.5M1766.5 385.2V392.2M1767.5 386.4V392.5M1768.5 386.5V394.3M1769.5 385.8V393.2M1770.5 381.9V598.0M1771.5 377.2V537.7M1772.5 381.1V535.3M1773.5 380.5V547.7M1774.5 376.5V541.5M1775.5 370.3V548.7M1776.5 372.0V538.8M1777.5 381.0V536.9M1778.5 365.1V536.2M1779.5 376.9V566.6M1780.5 381.9V549.5M1781.5 381.4V535.1M1782.5 381.6V538.6M1783.5 382.4V536.0M1784.5 380.3V567.5M1785.5 383.7V537.6M1786.5 378.0V551.7M1787.5 376.2V540.3M1788.5 379.8V537.6M1789.5 373.3V536.5M1790.5 378.6V541.4M1791.5 378.1V540.4M1792.5 369.7V537.9M1793.5 373.4V549.9M1794.5 383.8V546.6M1795.5 382.2V699.0M1796.5 367.2V375.0M1797.5 368.5V376.7M1798.5 369.6V377.2M1799.5 371.9V378.1M1800.5 373.3V378.9M1801.5 374.5V380.1M1802.5 375.3V382.6M1803.5 374.7V382.2M1804.5 377.3V383.1M1805.5 377.6V384.4M1806.5 378.4V385.0M1807.5 379.7V386.2M1808.5 380.3V386.7M1809.5 379.3V387.0M1810.5 380.3V387.3M1811.5 382.1V388.1M1812.5 382.2V389.9M1813.5 382.0V389.1M1814.5 382.2V390.3M1815.5 383.1V389.6M1816.5 383.5V390.2M1817.5 383.5V390.4M1818.5 384.4V391.4M1819.5 384.0V392.0M1820.5 384.6V391.2M1821.5 383.5V392.5M1822.5 383.3V391.2M1823.5 385.1V391.2M1824.5 385.6V391.6M1825.5 385.3V391.7M1826.5 384.6V391.6M1827.5 385.7V391.7M1828.5 385.8V391.7M1829.5 386.1V392.3M1830.5 386.3V392.9M1831.5 384.6V392.3M1832.5 384.8V392.3M1833.5 385.0V393.3M1834.5 384.4V392.4M1835.5 385.8V392.3M1836.5 386.4V393.8M1837.5 385.5V393.5M1838.5 384.9V394.1M1839.5 386.8V392.5M1840.5 384.8V392.7M1841.5 385.1V393.9M1842.5 386.9V394.4M1843.5 386.4V393.0M1844.5 386.9V393.9" stroke="#00a650" stroke-width="1.15" fill="none"/>
<path d="M96.5 287.0V293.8M97.5 287.7V295.2M98.5 289.5V296.4M99.5 290.0V298.6M100.5 290.3V300.0M101.5 289.8V298.5M102.5 292.7V299.2M103.5 293.3V300.7M104.5 293.3V300.4M105.5 293.5V301.4M106.5 294.6V301.7M107.5 295.4V302.8M108.5 294.7V302.5M109.5 295.9V304.2M110.5 296.7V304.2M111.5 295.1V303.6M112.5 296.5V304.2M113.5 297.0V305.1M114.5 296.8V306.7M115.5 297.6V305.6M116.5 298.1V304.6M117.5 298.3V304.9M118.5 298.5V305.5M119.5 297.1V307.0M120.5 298.5V307.3M121.5 298.9V305.5M122.5 298.2V305.7M123.5 298.9V306.4M124.5 298.6V306.7M125.5 297.4V307.4M126.5 299.1V306.3M127.5 299.5V305.9M128.5 299.3V306.0M129.5 299.6V306.4M130.5 298.8V306.2M131.5 299.4V306.2M132.5 299.3V306.8M133.5 299.6V306.4M134.5 299.9V308.6M135.5 299.2V306.3M136.5 298.2V307.6M137.5 299.9V307.9M138.5 299.8V306.5M139.5 298.3V308.1M140.5 299.9V307.2M141.5 300.1V306.7M142.5 297.9V307.0M143.5 297.9V306.9M144.5 300.0V306.6M145.5 298.5V307.1M146.5 300.1V307.7M147.5 298.8V307.2M148.5 299.9V308.3M149.5 299.8V308.9M150.5 300.2V306.7M151.5 300.2V308.4M152.5 299.9V307.4M153.5 298.0V307.7M154.5 299.8V308.6M155.5 300.1V306.9M156.5 300.1V307.1M157.5 299.9V307.2M158.5 299.8V308.8M159.5 299.6V306.7M160.5 300.3V308.3M161.5 299.0V307.5M162.5 299.5V308.3M163.5 300.1V306.9M164.5 299.5V308.2M165.5 299.4V307.3M166.5 299.8V307.4M167.5 299.1V308.7M168.5 299.5V309.0M169.5 300.2V307.2M170.5 300.3V307.8M171.5 300.2V308.0M172.5 298.4V309.1M173.5 299.9V307.3M174.5 300.2V307.2M175.5 300.2V307.0M176.5 299.6V307.2M177.5 299.4V307.4M178.5 298.8V309.1M179.5 300.3V308.3M180.5 299.9V308.9M181.5 300.2V308.9M182.5 300.3V306.7M183.5 300.3V309.0M184.5 300.3V308.6M185.5 299.8V307.0M186.5 300.1V306.7M187.5 300.3V306.8M188.5 300.1V306.9M189.5 299.7V306.8M190.5 300.1V306.7M191.5 300.2V307.3M192.5 298.7V307.2M193.5 299.9V307.4M194.5 300.0V308.5M195.5 299.9V307.0M196.5 300.3V308.1M197.5 300.3V308.5M198.5 300.1V306.9M199.5 300.2V307.2M200.5 298.0V307.5M201.5 300.1V307.0M202.5 299.8V307.4M203.5 300.3V306.9M204.5 300.3V306.7M205.5 299.5V307.4M206.5 299.1V308.7M207.5 298.0V306.8M208.5 300.3V308.5M209.5 299.0V308.4M210.5 299.7V308.5M211.5 299.5V308.8M212.5 300.2V306.7M213.5 300.3V308.5M214.5 299.4V307.9M215.5 298.8V308.2M216.5 299.3V306.7M217.5 300.3V306.9M218.5 299.0V309.2M219.5 299.7V307.9M220.5 299.3V306.7M221.5 299.0V306.9M222.5 300.3V306.9M223.5 299.2V306.9M224.5 299.8V306.7M225.5 298.0V309.0M226.5 298.7V309.1M227.5 300.2V309.0M228.5 300.3V307.4M229.5 298.7V307.4M230.5 300.2V308.8M231.5 300.3V307.3M232.5 300.3V307.0M233.5 300.3V308.2M234.5 298.2V308.0M235.5 300.0V307.1M236.5 300.0V307.2M237.5 300.3V308.5M238.5 300.2V306.9M239.5 300.0V309.1M240.5 299.3V308.9M241.5 299.1V306.7M242.5 298.9V307.8M243.5 298.2V306.7M244.5 300.1V308.1M245.5 299.3V306.9M246.5 300.2V306.8M247.5 299.7V306.8M248.5 299.8V306.8M249.5 300.0V306.7M250.5 148.1V292.9M251.5 152.3V288.5M252.5 153.6V290.9M253.5 151.1V286.7M254.5 150.3V294.0M255.5 152.9V287.5M256.5 153.4V303.1M257.5 144.4V296.4M258.5 154.0V302.1M259.5 130.4V286.6M260.5 139.1V288.4M261.5 133.4V289.0M262.5 151.1V287.3M263.5 152.1V298.8M264.5 143.5V295.2M265.5 144.6V292.0M266.5 153.0V286.3M267.5 144.3V300.2M268.5 144.8V287.0M269.5 142.3V288.1M270.5 132.4V301.2M271.5 152.9V286.3M272.5 143.9V288.8M273.5 142.4V293.5M274.5 151.1V286.4M275.5 19.0V286.7M276.5 151.1V286.2M277.5 129.7V287.5M278.5 137.4V294.4M279.5 144.3V287.1M280.5 150.0V288.3M281.5 153.0V296.7M282.5 134.7V298.5M283.5 133.5V287.7M284.5 151.2V286.0M285.5 129.7V288.3M286.5 142.9V288.1M287.5 151.7V291.4M288.5 153.1V288.9M289.5 151.2V289.9M290.5 143.8V288.5M291.5 153.5V287.9M292.5 132.3V287.1M293.5 130.8V286.3M294.5 147.7V303.7M295.5 148.5V287.2M296.5 145.9V288.3M297.5 151.9V287.4M298.5 139.3V286.6M299.5 141.6V294.8M300.5 153.2V287.3M301.5 149.5V295.8M302.5 135.3V288.3M303.5 57.0V288.2M304.5 151.4V292.9M305.5 151.4V288.4M306.5 152.1V288.5M307.5 149.7V286.0M308.5 151.2V288.7M309.5 131.0V301.7M310.5 151.6V287.6M311.5 146.0V287.6M312.5 135.7V298.4M313.5 153.2V287.0M314.5 147.9V286.8M315.5 151.1V288.7M316.5 145.9V288.1M317.5 153.7V287.1M318.5 142.8V288.4M319.5 151.3V288.9M320.5 133.4V299.4M321.5 153.9V297.1M322.5 152.3V286.4M323.5 128.3V288.1M324.5 143.2V290.4M325.5 131.1V288.4M326.5 152.8V293.0M327.5 148.4V292.5M328.5 152.8V287.9M329.5 151.8V287.3M330.5 18.0V287.4M331.5 280.1V287.5M332.5 281.0V288.8M333.5 281.4V292.6M334.5 284.9V291.8M335.5 284.7V292.8M336.5 286.6V296.5M337.5 287.3V297.4M338.5 288.9V297.6M339.5 290.5V297.1M340.5 291.3V297.9M341.5 291.0V298.7M342.5 292.8V301.6M343.5 293.5V300.5M344.5 292.5V301.6M345.5 293.1V301.7M346.5 295.1V301.6M347.5 295.6V304.0M348.5 296.0V302.6M349.5 296.3V303.4M350.5 296.7V305.6M351.5 296.0V303.6M352.5 297.2V303.8M353.5 295.2V306.2M354.5 295.9V304.2M355.5 295.7V304.4M356.5 298.2V304.6M357.5 298.3V305.3M358.5 297.8V305.0M359.5 297.5V305.2M360.5 298.0V305.9M361.5 298.1V306.7M362.5 299.0V305.5M363.5 298.0V305.6M364.5 297.6V307.6M365.5 297.4V306.4M366.5 299.4V307.7M367.5 299.2V306.9M368.5 299.1V306.7M369.5 298.1V308.0M370.5 299.4V307.6M371.5 297.6V306.8M372.5 299.1V306.2M373.5 299.8V306.3M374.5 299.9V306.3M375.5 299.9V307.3M376.5 298.8V306.4M377.5 300.0V306.4M378.5 299.8V306.5M379.5 299.2V308.4M380.5 298.7V306.5M381.5 299.7V306.9M382.5 299.7V308.8M383.5 300.0V306.8M384.5 298.6V308.7M385.5 300.1V307.2M386.5 300.0V307.0M387.5 299.5V306.6M388.5 300.2V306.6M389.5 298.1V307.6M390.5 298.3V306.6M391.5 299.1V306.8M392.5 299.3V306.8M393.5 298.1V306.8M394.5 300.2V307.6M395.5 300.1V307.2M396.5 300.2V306.7M397.5 300.1V306.8M398.5 298.6V307.6M399.5 300.2V308.0M400.5 299.4V307.2M401.5 300.1V307.3M402.5 300.3V307.0M403.5 299.5V307.3M404.5 300.1V308.2M405.5 298.5V307.2M406.5 299.8V308.1M407.5 298.1V308.1M408.5 300.0V307.9M409.5 298.7V307.4M410.5 298.9V307.3M411.5 298.3V306.7M412.5 298.9V307.6M413.5 299.5V307.1M414.5 299.4V307.1M415.5 299.0V306.9M416.5 299.9V307.0M417.5 299.7V307.2M418.5 300.2V307.6M419.5 298.3V307.0M420.5 298.1V306.8M421.5 300.3V306.7M422.5 298.3V308.3M423.5 299.7V307.4M424.5 300.0V307.6M425.5 299.2V307.4M426.5 299.9V307.5M427.5 298.1V307.3M428.5 297.9V307.0M429.5 300.2V307.0M430.5 299.7V306.7M431.5 298.7V309.2M432.5 300.2V306.9M433.5 300.2V306.8M434.5 300.0V309.3M435.5 299.9V308.3M436.5 300.3V306.9M437.5 299.2V306.8M438.5 300.1V307.8M439.5 299.5V307.1M440.5 298.9V306.7M441.5 299.6V308.5M442.5 300.3V306.7M443.5 299.1V307.0M444.5 300.3V308.8M445.5 299.8V307.1M446.5 299.5V309.1M447.5 300.2V306.7M448.5 300.1V308.8M449.5 299.4V309.1M450.5 300.2V307.1M451.5 300.1V308.7M452.5 300.2V306.8M453.5 298.0V306.9M454.5 299.6V307.1M455.5 300.3V308.5M456.5 300.2V306.9M457.5 299.2V307.0M458.5 300.3V306.9M459.5 299.8V308.5M460.5 300.0V308.1M461.5 300.2V309.1M462.5 299.8V306.7M463.5 298.4V307.6M464.5 299.4V306.8M465.5 299.7V307.5M466.5 299.9V307.8M467.5 299.9V306.7M468.5 300.1V307.8M469.5 300.0V307.4M470.5 300.1V306.8M471.5 300.1V307.1M472.5 298.4V308.6M473.5 300.3V307.9M474.5 299.9V307.8M475.5 298.6V307.0M476.5 300.3V308.9M477.5 300.3V306.7M478.5 300.1V307.1M479.5 299.3V306.8M480.5 299.1V306.9M481.5 300.0V306.7M482.5 300.1V306.7M483.5 300.3V306.9M484.5 300.2V308.9M485.5 299.1V307.1M486.5 300.1V306.7M487.5 298.2V307.9M488.5 299.4V307.2M489.5 299.9V307.4M490.5 298.9V306.7M491.5 300.1V307.5M492.5 299.6V306.9M493.5 299.9V306.8M494.5 299.1V307.9M495.5 299.7V307.2M496.5 300.1V308.7M497.5 300.0V308.4M498.5 300.2V307.9M499.5 298.9V308.5M500.5 300.0V306.8M501.5 300.2V308.0M502.5 300.0V307.3M503.5 300.3V306.7M504.5 300.3V308.0M505.5 300.3V307.3M506.5 299.6V306.7M507.5 299.4V309.0M508.5 300.2V306.7M509.5 298.6V306.9M510.5 298.6V308.9M511.5 298.6V308.1M512.5 298.7V307.0M513.5 300.0V308.5M514.5 299.5V307.7M515.5 298.3V309.0M516.5 300.2V306.9M517.5 299.2V306.8M518.5 300.3V306.7M519.5 299.0V306.7M520.5 298.8V307.2M521.5 299.7V307.2M522.5 299.2V308.5M523.5 300.1V307.2M524.5 300.2V306.7M525.5 298.0V308.8M526.5 298.1V307.7M527.5 299.2V307.7M528.5 298.1V307.3M529.5 300.0V308.7M530.5 299.2V307.2M531.5 300.0V307.6M532.5 299.5V307.1M533.5 298.4V307.5M534.5 300.1V306.7M535.5 299.7V307.5M536.5 300.3V307.4M537.5 299.9V306.7M538.5 299.6V308.0M539.5 297.9V308.1M540.5 299.9V306.8M541.5 298.9V306.7M542.5 132.0V304.3M543.5 159.3V309.3M544.5 159.8V308.0M545.5 128.3V304.6M546.5 157.5V305.0M547.5 159.2V303.5M548.5 132.4V308.3M549.5 159.3V304.9M550.5 158.5V304.1M551.5 149.9V305.6M552.5 158.0V307.6M553.5 145.3V306.4M554.5 159.0V305.4M555.5 159.2V304.2M556.5 127.3V304.7M557.5 151.8V304.7M558.5 156.9V304.6M559.5 145.9V303.2M560.5 126.8V304.5M561.5 158.2V303.2M562.5 130.7V311.9M563.5 148.2V303.5M564.5 159.6V306.5M565.5 158.0V305.1M566.5 124.5V303.9M567.5 148.0V310.9M568.5 18.0V305.1M569.5 282.1V290.1M570.5 282.5V291.6M571.5 286.1V295.1M572.5 285.3V293.9M573.5 288.3V295.0M574.5 288.0V298.1M575.5 290.2V297.9M576.5 289.0V297.7M577.5 291.5V299.4M578.5 291.8V300.6M579.5 293.1V300.6M580.5 293.8V301.5M581.5 293.7V301.2M582.5 293.8V302.2M583.5 295.5V304.2M584.5 295.3V304.1M585.5 294.7V303.3M586.5 294.8V305.0M587.5 295.3V305.1M588.5 297.1V303.7M589.5 296.9V304.5M590.5 295.4V305.4M591.5 296.5V305.9M592.5 297.9V305.3M593.5 298.1V305.2M594.5 297.8V305.0M595.5 298.5V305.4M596.5 298.8V306.3M597.5 151.1V297.6M598.5 156.1V298.5M599.5 152.3V293.7M600.5 157.3V293.8M601.5 155.2V292.3M602.5 153.0V293.6M603.5 151.0V292.4M604.5 152.7V291.8M605.5 148.1V291.1M606.5 126.1V291.4M607.5 147.6V300.1M608.5 155.5V293.9M609.5 127.5V291.4M610.5 156.5V292.8M611.5 147.5V297.0M612.5 156.7V292.8M613.5 155.5V292.0M614.5 134.5V292.5M615.5 156.5V292.7M616.5 152.7V292.8M617.5 156.0V292.4M618.5 153.9V295.6M619.5 132.7V293.5M620.5 157.8V293.2M621.5 30.0V300.4M622.5 280.3V289.9M623.5 282.4V291.9M624.5 283.7V292.1M625.5 284.9V293.3M626.5 286.3V294.2M627.5 288.8V297.0M628.5 289.4V296.6M629.5 289.1V298.2M630.5 291.4V299.3M631.5 290.8V298.8M632.5 291.4V299.5M633.5 293.4V300.2M634.5 292.3V301.1M635.5 294.2V303.7M636.5 295.2V302.4M637.5 293.6V302.6M638.5 295.8V302.5M639.5 295.8V303.2M640.5 295.7V303.2M641.5 294.9V303.8M642.5 297.0V304.5M643.5 297.0V304.4M644.5 296.2V305.5M645.5 296.7V306.5M646.5 298.3V304.9M647.5 296.5V304.9M648.5 298.6V305.4M649.5 298.6V306.7M650.5 298.5V307.8M651.5 297.9V305.8M652.5 143.5V309.6M653.5 131.2V304.6M654.5 143.5V306.3M655.5 140.6V311.7M656.5 143.3V305.2M657.5 138.9V306.4M658.5 135.7V306.6M659.5 133.4V306.7M660.5 142.8V307.9M661.5 125.2V306.7M662.5 139.6V312.6M663.5 137.1V312.1M664.5 143.0V305.4M665.5 125.7V306.1M666.5 143.6V309.7M667.5 132.9V304.5M668.5 140.4V311.3M669.5 124.8V311.3M670.5 142.5V311.1M671.5 141.2V304.2M672.5 131.5V310.9M673.5 129.7V312.2M674.5 123.8V304.5M675.5 136.0V308.7M676.5 141.4V304.6M677.5 133.7V304.4M678.5 68.0V306.7M679.5 280.3V287.9M680.5 280.2V288.5M681.5 282.4V290.2M682.5 284.8V291.5M683.5 285.4V295.1M684.5 285.2V295.5M685.5 288.3V295.1M686.5 287.7V296.4M687.5 288.7V298.7M688.5 289.8V298.1M689.5 291.5V301.1M690.5 291.9V300.1M691.5 291.6V301.2M692.5 294.1V300.8M693.5 294.5V302.4M694.5 294.7V302.8M695.5 294.3V302.2M696.5 294.9V302.5M697.5 295.4V303.7M698.5 295.6V303.4M699.5 297.1V303.8M700.5 296.8V306.2M701.5 296.2V304.1M702.5 297.4V305.5M703.5 298.0V306.7M704.5 298.2V306.4M705.5 296.9V306.0M706.5 298.5V307.1M707.5 297.9V306.3M708.5 298.8V307.8M709.5 298.2V305.5M710.5 297.4V305.5M711.5 298.0V305.7M712.5 299.0V306.4M713.5 297.9V306.0M714.5 299.3V306.0M715.5 299.2V307.0M716.5 299.6V307.2M717.5 299.7V306.6M718.5 298.5V306.1M719.5 299.7V306.3M720.5 299.8V306.6M721.5 299.1V306.3M722.5 299.1V308.3M723.5 299.9V308.6M724.5 299.9V308.3M725.5 299.8V308.6M726.5 300.0V307.0M727.5 299.0V306.8M728.5 299.5V306.6M729.5 299.5V306.5M730.5 299.4V306.6M731.5 299.1V306.6M732.5 298.8V308.4M733.5 300.1V306.7M734.5 300.1V306.7M735.5 300.1V306.7M736.5 298.1V307.0M737.5 298.0V306.7M738.5 298.0V307.2M739.5 300.1V308.4M740.5 299.7V306.8M741.5 299.8V306.9M742.5 299.9V306.7M743.5 299.4V306.8M744.5 177.2V314.7M745.5 167.6V323.5M746.5 186.4V317.7M747.5 184.5V318.1M748.5 176.6V309.6M749.5 169.9V313.2M750.5 182.9V317.7M751.5 186.1V309.0M752.5 185.6V314.9M753.5 186.8V319.1M754.5 184.8V320.6M755.5 186.4V307.8M756.5 170.1V318.5M757.5 185.8V320.6M758.5 184.9V306.9M759.5 177.7V308.4M760.5 181.4V308.8M761.5 177.0V311.8M762.5 175.3V321.4M763.5 176.2V320.0M764.5 173.9V306.4M765.5 176.4V324.5M766.5 185.9V324.5M767.5 172.0V307.0M768.5 167.5V318.7M769.5 45.0V307.8M770.5 184.9V337.7M771.5 186.9V306.4M772.5 112.0V343.4M773.5 179.1V344.3M774.5 178.5V307.5M775.5 182.4V335.6M776.5 174.6V312.4M777.5 166.7V335.9M778.5 184.1V329.9M779.5 183.0V338.4M780.5 184.0V338.9M781.5 185.1V313.8M782.5 179.5V307.1M783.5 180.5V307.1M784.5 175.7V312.6M785.5 186.2V342.0M786.5 169.2V308.0M787.5 174.7V307.5M788.5 181.4V308.8M789.5 184.0V311.8M790.5 186.7V308.4M791.5 166.4V306.2M792.5 175.0V306.3M793.5 184.6V342.5M794.5 185.2V340.2M795.5 167.4V327.6M796.5 177.2V331.6M797.5 176.0V312.6M798.5 20.0V340.4M799.5 184.5V345.0M800.5 107.0V307.7M801.5 184.9V306.7M802.5 186.8V308.0M803.5 176.0V306.5M804.5 168.1V341.6M805.5 184.5V343.0M806.5 179.7V333.2M807.5 185.0V313.3M808.5 179.6V331.4M809.5 170.4V331.9M810.5 184.3V332.8M811.5 176.4V307.6M812.5 184.9V339.1M813.5 185.7V310.0M814.5 186.6V337.8M815.5 185.8V307.9M816.5 180.9V337.0M817.5 172.3V308.1M818.5 175.4V313.8M819.5 186.9V328.5M820.5 182.0V306.9M821.5 184.6V342.5M822.5 185.0V328.2M823.5 173.1V312.0M824.5 180.6V312.6M825.5 63.0V341.2M826.5 171.9V332.2M827.5 182.9V310.1M828.5 107.0V329.8M829.5 175.6V314.3M830.5 171.7V308.0M831.5 175.5V310.6M832.5 186.9V306.8M833.5 167.8V332.7M834.5 178.2V306.8M835.5 177.5V343.6M836.5 179.6V312.0M837.5 181.2V340.6M838.5 167.7V306.8M839.5 179.0V330.6M840.5 178.7V341.5M841.5 184.9V311.9M842.5 186.5V327.6M843.5 172.7V312.6M844.5 180.7V308.3M845.5 185.7V341.2M846.5 170.5V308.1M847.5 169.7V306.2M848.5 184.9V331.0M849.5 173.3V330.9M850.5 177.1V306.2M851.5 173.9V341.5M852.5 15.0V305.1M853.5 58.0V307.1M854.5 129.8V311.8M855.5 158.4V303.3M856.5 159.1V305.0M857.5 157.7V305.1M858.5 159.5V307.8M859.5 139.2V303.0M860.5 153.6V310.6M861.5 158.6V303.5M862.5 155.9V305.8M863.5 158.4V309.1M864.5 158.3V311.8M865.5 156.7V303.9M866.5 137.9V305.5M867.5 153.1V304.5M868.5 127.6V311.6M869.5 147.8V304.7M870.5 158.4V304.6M871.5 131.1V304.6M872.5 136.3V305.3M873.5 146.4V303.9M874.5 126.3V311.3M875.5 159.1V305.5M876.5 157.4V305.3M877.5 129.2V303.3M878.5 159.1V304.6M879.5 154.7V305.8M880.5 60.0V305.5M881.5 290.3V297.9M882.5 291.6V299.1M883.5 290.7V299.8M884.5 291.4V300.9M885.5 291.7V300.4M886.5 294.3V302.8M887.5 294.6V301.9M888.5 294.3V302.0M889.5 295.6V302.8M890.5 294.2V303.8M891.5 296.7V303.8M892.5 294.7V303.8M893.5 297.2V306.0M894.5 297.1V304.1M895.5 297.3V306.7M896.5 298.0V304.5M897.5 296.3V304.7M898.5 297.7V305.5M899.5 297.5V306.2M900.5 297.1V305.3M901.5 139.1V299.6M902.5 138.1V295.9M903.5 141.3V300.1M904.5 101.5V293.1M905.5 115.9V299.0M906.5 121.7V298.1M907.5 139.8V302.3M908.5 140.3V293.1M909.5 137.4V294.6M910.5 98.6V301.9M911.5 139.6V295.8M912.5 140.4V294.0M913.5 140.1V302.6M914.5 140.4V293.9M915.5 139.2V295.2M916.5 126.8V296.0M917.5 95.3V293.3M918.5 101.0V297.7M919.5 135.6V293.4M920.5 112.7V294.8M921.5 141.2V295.3M922.5 134.8V294.3M923.5 136.3V301.0M924.5 137.1V293.7M925.5 139.2V293.2M926.5 30.0V297.4M927.5 117.6V294.9M928.5 103.8V298.1M929.5 140.2V295.7M930.5 140.1V294.4M931.5 139.6V294.7M932.5 125.3V293.8M933.5 139.8V293.4M934.5 128.6V301.6M935.5 127.2V293.7M936.5 140.8V300.5M937.5 118.0V294.7M938.5 140.1V301.0M939.5 139.4V295.1M940.5 134.0V294.2M941.5 103.9V294.6M942.5 141.4V297.9M943.5 137.1V295.9M944.5 140.7V294.6M945.5 140.1V297.7M946.5 136.1V295.9M947.5 125.7V295.4M948.5 137.3V293.1M949.5 141.2V297.5M950.5 140.8V293.2M951.5 139.1V293.8M952.5 120.2V301.0M953.5 47.0V295.9M954.5 101.8V293.1M955.5 123.7V295.4M956.5 140.8V299.8M957.5 140.0V299.3M958.5 136.1V295.1M959.5 140.9V293.7M960.5 134.0V295.2M961.5 139.6V294.2M962.5 121.4V294.8M963.5 141.2V300.4M964.5 139.2V295.7M965.5 139.3V295.5M966.5 140.7V295.3M967.5 134.3V294.6M968.5 139.4V293.3M969.5 135.3V301.0M970.5 134.7V294.8M971.5 122.9V296.2M972.5 97.7V301.3M973.5 131.5V295.5M974.5 112.6V299.3M975.5 113.5V296.4M976.5 139.8V300.9M977.5 141.2V295.9M978.5 141.1V296.0M979.5 25.0V297.5M980.5 131.9V294.5M981.5 279.1V288.2M982.5 282.0V290.3M983.5 284.5V293.2M984.5 285.8V293.7M985.5 286.9V295.7M986.5 286.3V294.8M987.5 287.0V295.7M988.5 290.2V297.1M989.5 289.6V297.6M990.5 290.3V298.9M991.5 292.5V299.1M992.5 293.2V301.7M993.5 293.9V300.9M994.5 294.3V303.1M995.5 294.1V303.3M996.5 295.4V303.8M997.5 295.8V302.9M998.5 295.7V302.7M999.5 296.4V304.8M1000.5 294.6V303.3M1001.5 297.1V305.1M1002.5 296.9V306.3M1003.5 297.7V304.7M1004.5 297.9V304.6M1005.5 297.3V304.6M1006.5 296.3V304.9M1007.5 298.5V304.9M1008.5 296.4V305.4M1009.5 298.2V306.0M1010.5 298.5V305.6M1011.5 299.0V305.5M1012.5 298.2V308.0M1013.5 299.2V307.3M1014.5 144.5V292.7M1015.5 144.3V294.2M1016.5 142.3V289.1M1017.5 145.9V290.5M1018.5 151.8V290.7M1019.5 142.8V290.0M1020.5 149.3V289.4M1021.5 132.1V289.8M1022.5 151.5V290.8M1023.5 134.1V290.9M1024.5 153.7V288.2M1025.5 145.2V290.1M1026.5 151.8V296.8M1027.5 42.0V288.4M1028.5 70.0V290.7M1029.5 145.2V297.4M1030.5 147.6V298.8M1031.5 140.7V290.3M1032.5 145.5V289.6M1033.5 141.4V288.6M1034.5 144.1V290.4M1035.5 150.3V290.8M1036.5 151.0V288.4M1037.5 152.3V289.3M1038.5 142.8V288.9M1039.5 152.0V292.5M1040.5 150.3V290.4M1041.5 153.3V289.1M1042.5 153.8V301.8M1043.5 152.7V288.9M1044.5 152.6V294.3M1045.5 147.5V302.1M1046.5 131.8V288.5M1047.5 144.4V288.1M1048.5 152.9V301.0M1049.5 144.8V290.0M1050.5 130.9V288.3M1051.5 144.8V288.3M1052.5 151.6V290.4M1053.5 136.5V290.1M1054.5 67.0V294.8M1055.5 147.9V290.2M1056.5 152.4V289.7M1057.5 151.9V291.0M1058.5 136.5V289.0M1059.5 140.8V289.8M1060.5 152.2V295.4M1061.5 148.4V294.2M1062.5 153.8V288.3M1063.5 151.9V290.6M1064.5 154.0V289.7M1065.5 145.2V288.0M1066.5 151.8V289.1M1067.5 133.7V289.0M1068.5 151.7V288.7M1069.5 152.6V289.9M1070.5 154.0V289.5M1071.5 146.3V289.8M1072.5 153.6V291.0M1073.5 141.6V290.4M1074.5 131.2V293.4M1075.5 130.7V290.3M1076.5 137.0V289.8M1077.5 146.5V288.9M1078.5 131.1V289.2M1079.5 149.7V299.3M1080.5 129.6V290.0M1081.5 141.4V288.1M1082.5 63.0V288.3M1083.5 130.2V300.8M1084.5 131.7V290.7M1085.5 149.0V294.9M1086.5 128.8V289.8M1087.5 151.4V289.7M1088.5 133.3V288.0M1089.5 153.7V292.8M1090.5 142.1V296.0M1091.5 143.1V288.2M1092.5 146.0V289.1M1093.5 135.3V292.1M1094.5 153.5V289.3M1095.5 136.0V302.7M1096.5 144.1V289.7M1097.5 146.1V290.9M1098.5 153.3V289.9M1099.5 141.3V289.9M1100.5 152.0V289.0M1101.5 142.0V290.8M1102.5 130.8V289.0M1103.5 142.5V288.7M1104.5 140.6V289.9M1105.5 144.0V290.0M1106.5 153.0V289.8M1107.5 152.9V290.5M1108.5 60.0V289.0M1109.5 143.6V289.9M1110.5 127.6V300.5M1111.5 152.0V290.4M1112.5 145.7V290.7M1113.5 152.9V289.2M1114.5 135.4V290.1M1115.5 135.1V288.0M1116.5 134.6V289.1M1117.5 149.9V289.3M1118.5 129.0V290.1M1119.5 149.2V290.4M1120.5 143.4V290.9M1121.5 128.2V288.9M1122.5 143.6V289.5M1123.5 153.8V289.1M1124.5 153.2V290.3M1125.5 141.7V289.9M1126.5 152.1V289.5M1127.5 146.0V290.5M1128.5 132.7V290.6M1129.5 150.0V289.6M1130.5 145.1V289.6M1131.5 143.1V288.4M1132.5 145.6V297.4M1133.5 141.6V290.7M1134.5 153.0V289.0M1135.5 52.0V294.8M1136.5 139.5V288.6M1137.5 151.2V290.8M1138.5 88.0V290.6M1139.5 131.8V301.6M1140.5 144.5V296.9M1141.5 132.6V290.6M1142.5 153.2V290.7M1143.5 152.1V290.1M1144.5 150.2V290.5M1145.5 143.8V288.2M1146.5 152.8V290.7M1147.5 151.4V294.0M1148.5 142.8V290.7M1149.5 147.3V291.0M1150.5 153.7V290.0M1151.5 149.9V300.1M1152.5 137.2V290.5M1153.5 137.1V300.1M1154.5 142.6V302.8M1155.5 15.0V297.6M1156.5 135.9V289.0M1157.5 153.1V288.8M1158.5 152.8V289.2M1159.5 152.6V288.3M1160.5 153.9V289.2M1161.5 147.8V290.1M1162.5 144.4V293.6M1163.5 143.5V295.7M1164.5 148.2V289.9M1165.5 152.7V288.5M1166.5 139.6V290.2M1167.5 143.5V290.4M1168.5 141.7V290.0M1169.5 152.7V288.8M1170.5 134.5V297.1M1171.5 148.9V289.1M1172.5 146.6V290.8M1173.5 141.7V290.3M1174.5 151.1V290.5M1175.5 144.0V290.5M1176.5 151.7V289.9M1177.5 136.0V290.6M1178.5 138.5V298.4M1179.5 151.3V290.2M1180.5 152.4V288.5M1181.5 153.2V297.4M1182.5 68.0V290.0M1183.5 146.1V289.2M1184.5 131.2V290.8M1185.5 137.9V290.3M1186.5 138.5V290.9M1187.5 152.7V295.5M1188.5 151.1V289.5M1189.5 152.5V289.5M1190.5 151.7V288.8M1191.5 144.1V288.7M1192.5 129.4V289.6M1193.5 143.5V291.0M1194.5 149.4V288.0M1195.5 153.5V292.3M1196.5 153.4V289.3M1197.5 130.3V292.3M1198.5 129.3V288.9M1199.5 140.5V301.3M1200.5 153.2V289.1M1201.5 144.9V289.9M1202.5 136.6V290.1M1203.5 131.5V297.9M1204.5 147.3V289.2M1205.5 151.8V289.8M1206.5 143.0V288.3M1207.5 153.3V288.6M1208.5 150.1V299.9M1209.5 67.0V292.9M1210.5 144.3V301.7M1211.5 136.3V289.6M1212.5 153.9V289.7M1213.5 149.4V295.3M1214.5 150.5V294.1M1215.5 136.3V288.8M1216.5 153.0V290.9M1217.5 152.0V297.6M1218.5 152.0V289.4M1219.5 152.5V290.4M1220.5 141.1V288.1M1221.5 133.4V290.3M1222.5 140.5V289.2M1223.5 153.6V288.2M1224.5 151.4V288.7M1225.5 154.0V289.5M1226.5 151.3V291.0M1227.5 141.2V290.6M1228.5 140.9V290.2M1229.5 153.1V304.2M1230.5 151.8V300.8M1231.5 149.6V288.9M1232.5 150.2V288.1M1233.5 134.0V289.8M1234.5 137.9V288.7M1235.5 149.5V290.9M1236.5 61.0V290.3M1237.5 280.3V289.2M1238.5 281.3V289.6M1239.5 282.4V290.6M1240.5 285.0V292.0M1241.5 285.7V294.1M1242.5 286.5V294.5M1243.5 288.7V295.9M1244.5 289.3V296.4M1245.5 288.8V297.2M1246.5 291.4V299.3M1247.5 290.3V300.8M1248.5 291.4V299.4M1249.5 292.4V300.0M1250.5 293.5V301.1M1251.5 294.6V302.4M1252.5 295.0V301.7M1253.5 295.5V304.0M1254.5 294.5V303.6M1255.5 294.3V304.6M1256.5 295.8V303.1M1257.5 296.3V305.8M1258.5 295.0V304.0M1259.5 296.1V304.0M1260.5 297.8V305.3M1261.5 297.9V306.0M1262.5 298.0V307.0M1263.5 297.9V306.9M1264.5 297.5V305.0M1265.5 297.8V305.2M1266.5 298.8V305.3M1267.5 298.8V306.3M1268.5 298.5V305.8M1269.5 298.3V305.6M1270.5 298.6V305.8M1271.5 298.4V307.4M1272.5 299.0V306.7M1273.5 298.9V308.4M1274.5 299.4V306.9M1275.5 299.1V306.3M1276.5 299.7V308.3M1277.5 298.7V306.2M1278.5 297.6V306.7M1279.5 299.8V306.9M1280.5 298.6V307.5M1281.5 299.3V306.3M1282.5 299.2V306.6M1283.5 299.1V307.8M1284.5 298.2V306.4M1285.5 299.2V306.8M1286.5 299.9V308.7M1287.5 299.8V307.9M1288.5 300.0V308.2M1289.5 298.3V306.5M1290.5 298.5V306.8M1291.5 300.0V307.8M1292.5 298.4V307.9M1293.5 299.1V306.9M1294.5 298.0V306.6M1295.5 297.9V309.2M1296.5 300.2V306.7M1297.5 297.8V309.0M1298.5 299.1V306.6M1299.5 297.9V306.7M1300.5 299.6V306.7M1301.5 299.5V309.1M1302.5 300.2V308.1M1303.5 300.0V307.2M1304.5 299.9V308.5M1305.5 300.3V308.2M1306.5 299.9V306.7M1307.5 298.0V307.8M1308.5 297.9V306.7M1309.5 300.2V306.9M1310.5 298.5V307.2M1311.5 299.6V307.0M1312.5 300.0V307.3M1313.5 298.6V307.6M1314.5 300.3V306.7M1315.5 300.2V306.9M1316.5 300.2V307.9M1317.5 299.5V307.0M1318.5 300.3V308.0M1319.5 300.2V307.3M1320.5 300.0V306.7M1321.5 299.6V307.7M1322.5 298.1V309.1M1323.5 300.2V306.9M1324.5 298.5V308.3M1325.5 299.3V306.7M1326.5 299.9V307.8M1327.5 300.3V308.8M1328.5 299.4V307.8M1329.5 299.3V306.7M1330.5 298.6V307.1M1331.5 298.6V308.2M1332.5 300.2V308.1M1333.5 299.9V306.8M1334.5 298.4V306.7M1335.5 300.3V306.8M1336.5 299.9V308.7M1337.5 299.0V307.5M1338.5 299.4V309.2M1339.5 298.9V307.2M1340.5 299.9V307.6M1341.5 298.6V307.8M1342.5 299.2V308.8M1343.5 298.6V307.7M1344.5 299.7V309.2M1345.5 300.1V306.8M1346.5 298.9V306.8M1347.5 300.3V307.6M1348.5 300.3V307.9M1349.5 300.0V307.9M1350.5 299.3V308.9M1351.5 299.0V307.1M1352.5 299.2V307.0M1353.5 300.3V306.8M1354.5 299.0V306.9M1355.5 298.8V308.1M1356.5 300.3V308.5M1357.5 300.2V306.7M1358.5 300.1V306.9M1359.5 298.8V308.3M1360.5 298.4V308.4M1361.5 298.1V307.8M1362.5 299.1V306.8M1363.5 299.3V306.7M1364.5 300.3V306.8M1365.5 300.3V308.3M1366.5 298.3V309.2M1367.5 298.8V307.0M1368.5 299.4V306.9M1369.5 299.9V308.1M1370.5 300.2V306.8M1371.5 299.1V308.4M1372.5 138.3V299.7M1373.5 147.7V290.6M1374.5 143.7V289.8M1375.5 152.0V288.6M1376.5 137.1V298.4M1377.5 147.5V288.5M1378.5 151.7V288.3M1379.5 149.6V289.3M1380.5 153.5V288.8M1381.5 141.9V302.5M1382.5 144.0V296.4M1383.5 151.6V288.6M1384.5 144.8V288.2M1385.5 145.4V289.9M1386.5 140.9V287.9M1387.5 153.8V291.3M1388.5 152.7V302.5M1389.5 152.1V287.4M1390.5 153.4V298.2M1391.5 139.8V298.9M1392.5 150.3V288.2M1393.5 144.9V289.3M1394.5 141.9V299.4M1395.5 151.1V288.6M1396.5 25.0V289.7M1397.5 153.4V288.3M1398.5 138.1V287.8M1399.5 149.9V300.6M1400.5 140.7V288.2M1401.5 153.7V288.8M1402.5 138.6V289.0M1403.5 153.3V287.8M1404.5 145.3V287.2M1405.5 152.4V289.9M1406.5 151.2V292.4M1407.5 143.1V287.0M1408.5 153.1V287.3M1409.5 148.9V287.5M1410.5 152.8V287.4M1411.5 144.1V287.8M1412.5 149.4V288.3M1413.5 152.2V287.5M1414.5 144.0V289.7M1415.5 147.8V297.8M1416.5 135.0V289.1M1417.5 145.2V288.9M1418.5 142.4V287.3M1419.5 147.0V294.0M1420.5 141.9V288.1M1421.5 131.8V289.7M1422.5 144.2V296.5M1423.5 33.0V288.2M1424.5 62.0V288.1M1425.5 149.7V288.9M1426.5 149.6V287.4M1427.5 143.4V288.0M1428.5 135.0V287.7M1429.5 136.0V288.6M1430.5 152.6V303.7M1431.5 145.5V287.6M1432.5 153.8V287.8M1433.5 152.0V287.0M1434.5 146.7V288.4M1435.5 144.1V296.6M1436.5 152.8V288.7M1437.5 153.7V287.3M1438.5 152.7V289.7M1439.5 149.0V289.0M1440.5 152.9V288.1M1441.5 144.9V288.6M1442.5 128.1V289.2M1443.5 148.4V303.1M1444.5 138.2V298.0M1445.5 141.3V287.9M1446.5 146.1V294.5M1447.5 130.1V302.5M1448.5 134.0V287.4M1449.5 146.0V288.3M1450.5 153.3V289.7M1451.5 30.0V289.4M1452.5 279.5V288.7M1453.5 279.7V288.5M1454.5 283.4V290.1M1455.5 283.4V293.8M1456.5 286.4V293.3M1457.5 287.6V295.1M1458.5 288.6V296.4M1459.5 289.2V296.6M1460.5 290.6V298.3M1461.5 291.1V298.6M1462.5 291.1V298.7M1463.5 291.8V299.3M1464.5 291.9V300.1M1465.5 292.1V302.6M1466.5 294.3V301.2M1467.5 295.2V302.9M1468.5 295.1V302.2M1469.5 294.9V302.7M1470.5 294.7V302.9M1471.5 294.7V303.2M1472.5 296.2V305.7M1473.5 296.6V305.4M1474.5 296.3V304.6M1475.5 297.1V306.8M1476.5 296.8V304.5M1477.5 298.2V304.7M1478.5 297.0V306.3M1479.5 296.5V305.0M1480.5 298.6V306.5M1481.5 298.6V306.1M1482.5 298.3V305.5M1483.5 297.7V305.5M1484.5 297.6V306.6M1485.5 299.2V306.3M1486.5 297.9V306.1M1487.5 299.5V306.5M1488.5 297.8V307.0M1489.5 299.2V306.1M1490.5 298.6V307.2M1491.5 299.5V306.3M1492.5 299.7V307.5M1493.5 297.9V308.5M1494.5 298.5V307.1M1495.5 297.8V308.7M1496.5 299.2V306.8M1497.5 299.0V306.4M1498.5 299.3V308.1M1499.5 300.0V308.7M1500.5 300.0V307.6M1501.5 299.7V306.7M1502.5 299.4V307.0M1503.5 300.0V306.7M1504.5 299.2V308.0M1505.5 299.3V306.7M1506.5 298.4V308.9M1507.5 299.3V306.7M1508.5 300.0V307.2M1509.5 300.2V306.7M1510.5 300.2V306.7M1511.5 298.7V307.5M1512.5 300.2V308.2M1513.5 298.1V306.8M1514.5 299.5V307.5M1515.5 299.6V306.7M1516.5 299.8V308.0M1517.5 300.0V309.1M1518.5 299.4V306.8M1519.5 300.2V306.7M1520.5 300.2V308.1M1521.5 300.3V306.7M1522.5 300.3V306.7M1523.5 300.0V306.8M1524.5 299.3V306.7M1525.5 300.2V309.2M1526.5 299.2V309.3M1527.5 299.2V307.9M1528.5 298.7V306.7M1529.5 298.3V308.3M1530.5 299.4V307.1M1531.5 299.8V306.7M1532.5 298.3V306.7M1533.5 298.9V307.6M1534.5 298.7V306.8M1535.5 299.4V308.7M1536.5 299.0V306.7M1537.5 299.5V307.6M1538.5 300.2V306.8M1539.5 299.7V308.9M1540.5 300.3V307.3M1541.5 300.2V307.1M1542.5 300.1V306.9M1543.5 298.8V307.5M1544.5 299.3V307.2M1545.5 300.2V306.8M1546.5 300.2V307.7M1547.5 299.3V307.2M1548.5 299.9V309.2M1549.5 299.4V309.2M1550.5 298.7V308.6M1551.5 300.1V307.0M1552.5 298.3V307.3M1553.5 299.9V306.7M1554.5 299.7V307.3M1555.5 300.1V306.7M1556.5 299.6V308.1M1557.5 300.3V307.8M1558.5 299.9V307.8M1559.5 299.2V309.3M1560.5 299.7V306.7M1561.5 299.1V306.7M1562.5 298.9V309.3M1563.5 299.5V307.7M1564.5 299.9V306.8M1565.5 299.2V307.8M1566.5 299.5V308.5M1567.5 299.7V308.4M1568.5 298.0V307.2M1569.5 298.6V307.2M1570.5 299.9V307.7M1571.5 299.7V306.7M1572.5 298.0V306.8M1573.5 299.8V306.8M1574.5 299.6V306.9M1575.5 299.7V308.6M1576.5 300.3V308.5M1577.5 298.4V306.8M1578.5 299.4V306.7M1579.5 298.2V308.8M1580.5 299.3V306.8M1581.5 298.8V308.3M1582.5 300.0V308.1M1583.5 299.8V309.2M1584.5 299.1V307.6M1585.5 300.2V306.9M1586.5 299.4V308.2M1587.5 300.1V307.6M1588.5 299.1V307.0M1589.5 299.9V307.6M1590.5 300.3V308.1M1591.5 300.1V306.7M1592.5 298.7V307.9M1593.5 299.2V307.0M1594.5 299.5V306.7M1595.5 300.3V307.4M1596.5 298.9V308.1M1597.5 297.9V307.7M1598.5 300.2V307.0M1599.5 300.1V307.4M1600.5 300.3V308.2M1601.5 300.3V308.6M1602.5 300.1V308.3M1603.5 298.6V308.6M1604.5 300.2V306.8M1605.5 300.1V306.7M1606.5 300.2V307.4M1607.5 299.0V307.5M1608.5 298.8V306.7M1609.5 299.3V306.8M1610.5 299.1V306.8M1611.5 300.1V307.0M1612.5 300.3V308.0M1613.5 298.1V307.3M1614.5 300.1V306.9M1615.5 300.3V307.9M1616.5 299.5V306.7M1617.5 299.0V307.1M1618.5 298.5V306.7M1619.5 299.1V306.8M1620.5 298.8V309.0M1621.5 300.1V306.9M1622.5 299.4V306.9M1623.5 298.0V307.8M1624.5 297.9V307.3M1625.5 299.6V306.8M1626.5 299.0V306.8M1627.5 299.8V308.7M1628.5 298.6V308.2M1629.5 299.9V306.7M1630.5 298.5V306.8M1631.5 299.1V307.8M1632.5 300.3V308.3M1633.5 300.2V307.3M1634.5 300.3V306.8M1635.5 300.3V308.7M1636.5 300.1V306.7M1637.5 299.2V306.9M1638.5 299.3V307.2M1639.5 298.2V306.8M1640.5 299.7V306.7M1641.5 300.2V308.5M1642.5 298.8V306.9M1643.5 298.3V307.4M1644.5 299.6V307.3M1645.5 299.5V306.9M1646.5 298.0V307.6M1647.5 299.5V307.4M1648.5 300.3V308.4M1649.5 298.1V307.1M1650.5 298.8V308.0M1651.5 298.8V307.6M1652.5 299.4V308.6M1653.5 300.2V306.8M1654.5 300.3V307.8M1655.5 300.1V307.5M1656.5 300.2V306.7M1657.5 298.3V308.0M1658.5 300.2V307.2M1659.5 298.4V306.8M1660.5 299.9V308.7M1661.5 300.0V307.7M1662.5 157.9V304.3M1663.5 156.9V303.9M1664.5 157.7V305.2M1665.5 133.0V306.6M1666.5 157.1V303.9M1667.5 158.1V307.5M1668.5 132.7V303.2M1669.5 151.3V303.4M1670.5 160.0V312.2M1671.5 158.1V303.1M1672.5 148.0V305.2M1673.5 153.1V304.9M1674.5 150.1V305.4M1675.5 134.2V305.0M1676.5 135.6V303.8M1677.5 158.1V304.0M1678.5 150.2V303.1M1679.5 149.0V303.9M1680.5 134.2V303.6M1681.5 158.1V304.6M1682.5 130.8V311.7M1683.5 157.1V305.4M1684.5 154.5V305.2M1685.5 153.3V307.1M1686.5 20.0V304.9M1687.5 286.1V296.7M1688.5 289.3V296.7M1689.5 290.3V297.3M1690.5 290.6V298.6M1691.5 291.5V298.4M1692.5 292.6V299.2M1693.5 293.3V300.4M1694.5 293.9V301.7M1695.5 294.5V302.7M1696.5 294.4V301.4M1697.5 295.4V303.6M1698.5 295.9V303.8M1699.5 296.0V305.1M1700.5 294.3V305.2M1701.5 295.4V303.7M1702.5 296.1V306.0M1703.5 297.1V304.9M1704.5 295.6V304.1M1705.5 297.9V305.9M1706.5 124.4V296.6M1707.5 156.4V293.5M1708.5 147.5V296.2M1709.5 151.9V293.6M1710.5 155.7V291.2M1711.5 155.7V297.7M1712.5 128.3V296.7M1713.5 150.8V293.2M1714.5 140.2V292.1M1715.5 155.8V291.3M1716.5 146.3V296.2M1717.5 151.3V294.0M1718.5 154.8V292.4M1719.5 131.2V291.6M1720.5 145.4V293.6M1721.5 156.8V296.2M1722.5 156.6V293.3M1723.5 155.3V293.7M1724.5 153.0V292.8M1725.5 150.1V291.9M1726.5 155.1V291.9M1727.5 141.6V296.2M1728.5 155.0V293.6M1729.5 144.9V292.3M1730.5 155.2V297.0M1731.5 20.0V293.1M1732.5 282.3V289.0M1733.5 283.8V292.5M1734.5 284.1V291.8M1735.5 285.6V293.7M1736.5 285.5V295.2M1737.5 288.6V297.1M1738.5 288.3V297.5M1739.5 289.6V299.2M1740.5 291.4V298.1M1741.5 290.1V299.7M1742.5 291.1V299.6M1743.5 292.4V300.9M1744.5 293.2V300.9M1745.5 293.4V301.2M1746.5 294.1V302.9M1747.5 293.9V302.1M1748.5 295.5V302.5M1749.5 296.2V303.2M1750.5 296.8V303.3M1751.5 295.0V303.7M1752.5 297.0V306.3M1753.5 297.0V304.3M1754.5 297.9V305.2M1755.5 297.7V305.8M1756.5 298.2V306.6M1757.5 297.0V305.6M1758.5 297.2V306.1M1759.5 298.4V306.7M1760.5 297.2V305.4M1761.5 298.8V305.7M1762.5 298.8V306.7M1763.5 297.4V306.3M1764.5 299.2V306.3M1765.5 299.0V306.6M1766.5 297.8V305.9M1767.5 299.5V306.5M1768.5 299.5V306.5M1769.5 299.6V306.6M1770.5 142.3V304.1M1771.5 140.0V303.5M1772.5 142.8V303.0M1773.5 136.8V304.3M1774.5 142.8V303.3M1775.5 130.5V304.1M1776.5 133.1V308.7M1777.5 141.7V303.2M1778.5 137.8V308.6M1779.5 117.4V305.8M1780.5 130.5V303.1M1781.5 122.4V303.1M1782.5 118.7V307.3M1783.5 126.3V303.6M1784.5 136.9V304.0M1785.5 138.0V304.9M1786.5 138.1V308.9M1787.5 138.1V305.4M1788.5 136.5V304.0M1789.5 136.5V305.8M1790.5 136.0V303.9M1791.5 137.7V308.3M1792.5 122.5V309.5M1793.5 137.0V305.3M1794.5 126.5V305.5M1795.5 20.0V309.1M1796.5 279.4V286.9M1797.5 281.8V289.6M1798.5 283.5V290.0M1799.5 283.4V291.5M1800.5 286.2V292.8M1801.5 287.2V294.1M1802.5 287.5V296.2M1803.5 289.7V296.6M1804.5 290.6V297.6M1805.5 289.8V299.5M1806.5 291.5V299.3M1807.5 291.3V300.0M1808.5 292.1V300.6M1809.5 293.0V300.7M1810.5 294.3V301.8M1811.5 295.1V302.2M1812.5 295.6V302.1M1813.5 295.1V302.6M1814.5 296.4V303.3M1815.5 294.5V303.1M1816.5 296.6V305.2M1817.5 296.0V305.7M1818.5 297.6V304.4M1819.5 296.7V304.3M1820.5 296.3V304.8M1821.5 297.8V307.1M1822.5 296.0V304.8M1823.5 298.4V305.9M1824.5 296.5V305.2M1825.5 297.2V307.0M1826.5 298.9V307.0M1827.5 298.0V307.6M1828.5 297.9V306.6M1829.5 299.1V307.0M1830.5 298.0V306.1M1831.5 298.3V306.8M1832.5 298.9V306.5M1833.5 299.5V306.4M1834.5 299.6V307.8M1835.5 298.2V307.4M1836.5 299.8V308.1M1837.5 298.1V308.1M1838.5 298.2V308.6M1839.5 299.7V308.5M1840.5 298.1V307.1M1841.5 300.0V306.4M1842.5 299.6V307.5M1843.5 299.8V306.5M1844.5 299.5V307.8" stroke="#0000ff" stroke-width="1.15" fill="none"/>
<path d="M250.35 362.8V549.0M275.35 377.1V615.0M303.35 377.9V699.0M330.35 360.2V699.0M568.35 388.8V645.0M621.35 371.8V699.0M653.35 375.7V590.0M678.35 383.4V698.0M769.35 380.8V699.0M772.35 385.3V575.0M798.35 385.5V699.0M800.35 380.4V614.0M825.35 356.0V695.0M828.35 387.0V620.0M852.35 386.7V650.0M880.35 384.9V620.0M902.35 382.6V600.0M926.35 375.8V650.0M953.35 374.9V699.0M979.35 374.8V617.0M1014.35 370.7V574.0M1027.35 378.0V699.0M1028.35 379.5V612.0M1054.35 368.0V699.0M1082.35 380.6V648.0M1108.35 354.6V699.0M1135.35 349.2V699.0M1138.35 377.5V602.0M1155.35 367.9V690.0M1182.35 374.1V655.0M1209.35 371.0V699.0M1236.35 370.6V651.0M1372.35 373.9V537.0M1396.35 373.2V680.0M1423.35 360.2V699.0M1424.35 376.4V612.0M1451.35 355.1V695.0M1663.35 393.3V603.0M1686.35 394.6V664.0M1731.35 377.5V699.0M1770.35 381.9V598.0M1795.35 382.2V699.0" stroke="#00a650" stroke-width="1.3" fill="none"/>
<path d="M275.35 19.0V286.7M303.35 57.0V288.2M330.35 18.0V287.4M568.35 18.0V305.1M621.35 30.0V300.4M678.35 68.0V306.7M769.35 45.0V307.8M772.35 112.0V343.4M798.35 20.0V340.4M800.35 107.0V307.7M825.35 63.0V341.2M828.35 107.0V329.8M852.35 15.0V305.1M853.35 58.0V307.1M880.35 60.0V305.5M926.35 30.0V297.4M953.35 47.0V295.9M979.35 25.0V297.5M1027.35 42.0V288.4M1028.35 70.0V290.7M1054.35 67.0V294.8M1082.35 63.0V288.3M1108.35 60.0V289.0M1135.35 52.0V294.8M1138.35 88.0V290.6M1155.35 15.0V297.6M1182.35 68.0V290.0M1209.35 67.0V292.9M1236.35 61.0V290.3M1396.35 25.0V289.7M1423.35 33.0V288.2M1424.35 62.0V288.1M1451.35 30.0V289.4M1686.35 20.0V304.9M1731.35 20.0V293.1M1795.35 20.0V309.1" stroke="#0000ff" stroke-width="1.3" fill="none"/>
<path d="M276.5 154.0V277.0M304.5 154.0V277.0M770.5 187.0V297.0M799.5 187.0V297.0M826.5 187.0V297.0M853.5 160.0V294.0M854.5 160.0V294.0M927.5 142.0V284.0M954.5 142.0V284.0M1028.5 154.0V279.0M1029.5 154.0V279.0M1055.5 154.0V279.0M1083.5 154.0V279.0M1109.5 154.0V279.0M1136.5 154.0V279.0M1139.5 154.0V279.0M1156.5 154.0V279.0M1183.5 154.0V279.0M1210.5 154.0V279.0M1397.5 154.0V278.0M1424.5 154.0V278.0M1425.5 154.0V278.0M277.5 183.0V276.0M560.5 208.7V293.0M608.5 183.8V281.0M672.5 159.4V294.0M795.5 248.7V296.0M875.5 189.8V293.0M922.5 159.5V283.0M1063.5 196.6V278.0M1176.5 204.0V278.0M1413.5 195.9V277.0M1674.5 185.4V293.0M1715.5 193.5V281.0M1783.5 189.1V293.0" stroke="#b6b6ff" stroke-width="0.9" fill="none"/>
<path d="M276.5 381.0V506.0M304.5 381.0V506.0M770.5 390.0V505.0M799.5 390.0V505.0M826.5 390.0V505.0M853.5 395.0V537.0M854.5 395.0V537.0M927.5 386.0V534.0M954.5 386.0V534.0M1028.5 384.0V507.0M1029.5 384.0V507.0M1055.5 384.0V507.0M1083.5 384.0V507.0M1109.5 384.0V507.0M1136.5 384.0V507.0M1139.5 384.0V507.0M1156.5 384.0V507.0M1183.5 384.0V507.0M1210.5 384.0V507.0M1397.5 384.0V505.0M1424.5 384.0V505.0M1425.5 384.0V505.0M277.5 388.0V443.2M560.5 404.0V478.4M608.5 393.0V468.6M672.5 393.0V482.9M795.5 397.0V453.4M875.5 402.0V500.3M922.5 393.0V506.2M1063.5 391.0V463.9M1176.5 391.0V439.8M1413.5 391.0V464.2M1674.5 404.0V508.4M1715.5 393.0V475.3M1783.5 393.0V465.8" stroke="#b4e3ca" stroke-width="0.9" fill="none"/>
<path d="M8.6 292.8H1845" stroke="#111" stroke-width="1.6" stroke-dasharray="22.3 7.7" fill="none"/>
<path d="M57.2 381.5H1845" stroke="#111" stroke-width="1.6" stroke-dasharray="22.3 7.7" fill="none"/>
</svg>
<div class="a" style="left:1px;top:11px;width:9px;height:9px;background:#0000ff;border:1px solid #111"></div>
<div class="a" style="left:49px;top:11px;width:9px;height:9px;background:#00a650;border:1px solid #111"></div>
<div class="a" style="left:1px;top:288.5px;width:9px;height:9px;background:#0000ff;border:1px solid #111"></div>
<div class="a" style="left:49px;top:377.5px;width:9px;height:9px;background:#00a650;border:1px solid #111"></div>
<div class="a" style="left:91px;top:694.5px;width:9px;height:9px;background:#fff;border:1px solid #111;box-shadow:inset 0 0 0 .3px #111"></div>
<div class="a" style="left:1838.5px;top:693.5px;width:11px;height:11px;border-radius:50%;background:#008080;border:1px solid #10302c"></div>
<div class="t bl" style="top:5.0px;right:1868.5px;text-align:right;">4.53</div>
<div class="t bl" style="top:74.2px;right:1868.5px;text-align:right;">4.03</div>
<div class="t bl" style="top:142.0px;right:1868.5px;text-align:right;">3.53</div>
<div class="t gr" style="top:142.0px;right:1821.0px;text-align:right;">4.175</div>
<div class="t rd" style="top:137.1px;left:1848.0px;">40.0</div>
<div class="t bl" style="top:211.1px;right:1868.5px;text-align:right;">3.03</div>
<div class="t gr" style="top:211.1px;right:1821.0px;text-align:right;">3.675</div>
<div class="t rd" style="top:211.1px;left:1848.0px;">35.71</div>
<div class="t bl" style="top:279.6px;right:1868.5px;text-align:right;">2.53</div>
<div class="t gr" style="top:279.6px;right:1821.0px;text-align:right;">3.175</div>
<div class="t rd" style="top:279.6px;left:1848.0px;">31.71</div>
<div class="t bl" style="top:348.1px;right:1868.5px;text-align:right;">2.03</div>
<div class="t gr" style="top:348.1px;right:1821.0px;text-align:right;">2.675</div>
<div class="t rd" style="top:348.1px;left:1848.0px;">27.71</div>
<div class="t bl" style="top:416.5px;right:1868.5px;text-align:right;">1.53</div>
<div class="t gr" style="top:416.5px;right:1821.0px;text-align:right;">2.175</div>
<div class="t rd" style="top:416.5px;left:1848.0px;">23.71</div>
<div class="t bl" style="top:485.0px;right:1868.5px;text-align:right;">1.03</div>
<div class="t gr" style="top:485.0px;right:1821.0px;text-align:right;">1.675</div>
<div class="t rd" style="top:485.0px;left:1848.0px;">19.71</div>
<div class="t bl" style="top:553.5px;right:1868.5px;text-align:right;">0.53</div>
<div class="t gr" style="top:553.5px;right:1821.0px;text-align:right;">1.175</div>
<div class="t rd" style="top:553.5px;left:1848.0px;">15.71</div>
<div class="t bl" style="top:621.9px;right:1868.5px;text-align:right;">0.03</div>
<div class="t gr" style="top:621.9px;right:1821.0px;text-align:right;">0.675</div>
<div class="t rd" style="top:621.9px;left:1848.0px;">11.71</div>
<div class="t bl" style="top:689.8px;right:1868.5px;text-align:right;">-0.47</div>
<div class="t gr" style="top:689.8px;right:1821.0px;text-align:right;">0.175</div>
<div class="t rd" style="top:689.8px;left:1848.0px;">7.706</div>
<div class="t bl" style="top:28.8px;right:1869.5px;text-align:right;">V</div>
<div class="t gr" style="top:28.8px;right:1821.0px;text-align:right;">5.0</div>
<div class="t gr" style="top:52.1px;right:1821.5px;text-align:right;">V</div>
<div class="t rd" style="top:106.0px;left:1848.0px;">V</div>
<div class="t " style="top:708.5px;left:56.2px;width:80px;text-align:center;">403.0</div>
<div class="t " style="top:708.5px;left:230.1px;width:80px;text-align:center;">404.5</div>
<div class="t " style="top:708.5px;left:405.1px;width:80px;text-align:center;">406.1</div>
<div class="t " style="top:708.5px;left:580.2px;width:80px;text-align:center;">407.7</div>
<div class="t " style="top:708.5px;left:755.2px;width:80px;text-align:center;">409.2</div>
<div class="t " style="top:708.5px;left:930.2px;width:80px;text-align:center;">410.8</div>
<div class="t " style="top:708.5px;left:1105.2px;width:80px;text-align:center;">412.3</div>
<div class="t " style="top:708.5px;left:1280.2px;width:80px;text-align:center;">413.9</div>
<div class="t " style="top:708.5px;left:1455.2px;width:80px;text-align:center;">415.5</div>
<div class="t " style="top:708.5px;left:1630.2px;width:80px;text-align:center;">417.0</div>
<div class="t " style="top:708.5px;left:1805.2px;width:80px;text-align:center;">418.6</div>
<div class="a" style="left:0;top:730px;width:44px;height:16px;border:2px solid #0000ff;background:#8484fb;color:#d9d9ff;font-size:11.2px;letter-spacing:-.2px;line-height:16.5px;text-align:center">x1.0</div>
<div class="a" style="left:50px;top:732px;width:43.5px;height:16px;background:#82d0a8;color:#d6f2e2;font-size:11.2px;letter-spacing:-.2px;line-height:16.5px;text-align:center">x1.0</div>
<div class="a" style="left:1846px;top:732.5px;width:44px;height:15.5px;background:#ff919b;color:#ffdfe3;font-size:11.2px;letter-spacing:-.2px;line-height:16px;text-align:center">x1.0</div>
<div class="t " style="top:731.0px;left:99.0px;font-size:14.6px;letter-spacing:0">ms</div>
<div class="a" style="left:0;top:751px;width:1892px;height:20px;background:linear-gradient(180deg,#d9d5ca 0,#ebe3d5 6%,#f4f0e7 50%,#fbf9f4 100%)"></div>
<div class="a" style="left:1892.5px;top:2px;width:19px;height:749px;background:linear-gradient(90deg,#dcd7cb 0,#ebe3d5 8%,#f4f0e7 50%,#fbf9f4 100%)"></div>
<div class="sb" style="left:0;top:751.5px;width:19.5px;height:19px"></div><svg class="a" style="left:4px;top:755px" width="12" height="12" viewBox="0 0 12 12"><path d="M8 1.5L3.5 6L8 10.5" stroke="#8e7869" stroke-width="1.7" fill="none"/></svg>
<div class="sb" style="left:1872.5px;top:751.5px;width:19px;height:19px"></div><svg class="a" style="left:1876px;top:755px" width="12" height="12" viewBox="0 0 12 12"><path d="M4 1.5L8.5 6L4 10.5" stroke="#8e7869" stroke-width="1.7" fill="none"/></svg>
<div class="sb" style="left:767px;top:751px;width:26.5px;height:19.6px"></div>
<svg class="a" style="left:774px;top:755px" width="12" height="12" viewBox="0 0 12 12"><path d="M3.8 2V10M6.45 2V10M9.1 2V10" stroke="#8e7869" stroke-width="1.3" fill="none"/></svg>
<div class="sb" style="left:1892.5px;top:2.5px;width:18.5px;height:19px"></div><svg class="a" style="left:1896px;top:5px" width="12" height="12" viewBox="0 0 12 12"><path d="M1.5 8.5L6 4L10.5 8.5" stroke="#8e7869" stroke-width="1.7" fill="none"/></svg>
<div class="sb" style="left:1893px;top:731.5px;width:18px;height:18.5px"></div><svg class="a" style="left:1896px;top:735px" width="12" height="12" viewBox="0 0 12 12"><path d="M1.5 3.5L6 8L10.5 3.5" stroke="#8e7869" stroke-width="1.7" fill="none"/></svg>
<div class="sb" style="left:1892.3px;top:174.4px;width:18.7px;height:351.2px"></div>
<svg class="a" style="left:1896px;top:344px" width="12" height="12" viewBox="0 0 12 12"><path d="M1.5 3.1H10M1.5 5.7H10M1.5 8.3H10" stroke="#8e7869" stroke-width="1.2" fill="none"/></svg>
<div class="a" style="left:1913px;top:0;width:2px;height:901px;background:#7c7c7c"></div>
<div class="a" style="left:0;top:0;width:1914px;height:2px;background:#000"></div>
<div class="a" style="left:1911px;top:0;width:1px;height:773px;background:#141414"></div>
<div class="a" style="left:1912px;top:0;width:2px;height:773px;background:#000"></div>
<div class="a" style="left:0;top:771px;width:1914px;height:2.3px;background:#000"></div>
<div class="a" style="left:1492px;top:3px;width:400px;height:65px;box-sizing:border-box;border:1px solid #b9b9b9;background:#e9e9e9"></div>
<div class="a" style="left:1494.5px;top:5px;width:395px;height:61px;background:#a0a0a0"></div>
<div class="cell" style="left:1515px;top:26.3px;width:123.5px"></div>
<div class="cell" style="left:1640.3px;top:26.3px;width:123.5px"></div>
<div class="cell" style="left:1765.5px;top:26.3px;width:123.5px"></div>
<div class="cell" style="left:1515px;top:46.6px;width:123.5px"></div>
<div class="cell" style="left:1640.3px;top:46.6px;width:123.5px"></div>
<div class="cell" style="left:1765.5px;top:46.6px;width:123.5px"></div>
<div class="a" style="left:1638.5px;top:7px;width:1.6px;height:59px;background:#c4c4c4"></div>
<div class="a" style="left:1763.8px;top:7px;width:1.6px;height:59px;background:#c4c4c4"></div>
<div class="a" style="left:1515px;top:44.8px;width:374px;height:1.8px;background:#c4c4c4"></div>
<div class="a" style="left:1501px;top:32.3px;width:6px;height:6px;background:#0000ff;border:1px solid #111"></div>
<div class="a" style="left:1501px;top:52.4px;width:6px;height:6px;background:#00a650;border:1px solid #111"></div>
<div class="t" style="left:1518px;top:27.7px;color:#141414;letter-spacing:-1.05px;font-size:16.3px">2.5 V</div>
<div class="t" style="left:1644px;top:27.0px;color:#141414;letter-spacing:.1px">--.--</div>
<div class="t" style="left:1770px;top:27.0px;color:#141414;letter-spacing:.1px">--.--</div>
<div class="t" style="left:1518px;top:47.9px;color:#141414;letter-spacing:-1.05px;font-size:16.3px">2.5 V</div>
<div class="t" style="left:1644px;top:47.2px;color:#141414;letter-spacing:.1px">--.--</div>
<div class="t" style="left:1770px;top:47.2px;color:#141414;letter-spacing:.1px">--.--</div>
<div class="t" style="left:1521px;top:7px;color:#ececec">1</div>
<div class="t" style="left:1645px;top:7px;color:#ececec">2</div>
<div class="t" style="left:1771px;top:7px;color:#ececec;font-size:15px">&#916;</div>
<div class="a" style="left:1853.5px;top:17.3px;width:9px;height:4px;background:#fff"></div>
<svg class="a" style="left:1873px;top:8.5px" width="14" height="14" viewBox="0 0 14 14"><path d="M1.3 1.3L12.3 11.7M12.3 1.3L1.3 11.7" stroke="#fff" stroke-width="2.3" fill="none"/></svg>
<div class="a" style="left:1657px;top:669.5px;width:174px;height:26px;box-sizing:border-box;border:1px solid #b4b4b4;background:#e6e6e6"></div>
<div class="a" style="left:1659.5px;top:672px;width:169px;height:21px;background:#a0a0a0"></div>
<div class="t" style="left:1662px;top:673.5px;color:#f4f4f4;font-weight:bold;font-size:15.1px;letter-spacing:0">Zoom Overview</div>
<svg class="a" style="left:1791px;top:675px" width="15" height="15" viewBox="0 0 15 15"><path d="M4.7 4.5V1.9H13V9.3H10.2" stroke="#f2f2f2" stroke-width="1.5" fill="none"/><rect x="1.8" y="5.4" width="8" height="7" stroke="#f2f2f2" stroke-width="1.5" fill="none"/></svg>
<svg class="a" style="left:1811.5px;top:675.5px" width="14" height="14" viewBox="0 0 14 14"><path d="M1.3 1.3L12.3 11.7M12.3 1.3L1.3 11.7" stroke="#f4f4f4" stroke-width="2.2" fill="none"/></svg>
<div class="a" style="left:0;top:773px;width:1913px;height:21px;background:#44587a;border-top:1.5px solid #5c6470;box-sizing:border-box"></div>
<div class="t" style="left:5px;top:775px;color:#f6f6f6;font-weight:bold;font-size:15px;letter-spacing:0;transform:scaleX(.925);transform-origin:0 50%">Channel Labels</div>
<svg class="a" style="left:1865px;top:776.5px" width="13" height="14" viewBox="0 0 13 14"><path d="M3.2 1.5H9.2V6.2H3.2ZM0.8 6.6H11.4M6.2 6.6V13" stroke="#fff" stroke-width="1.9" fill="none"/></svg>
<div class="a" style="left:1882.5px;top:785.5px;width:8.7px;height:4px;background:#fff"></div>
<svg class="a" style="left:1898.5px;top:776.5px" width="14" height="14" viewBox="0 0 14 14"><path d="M1.4 1.4L11.8 12.6M11.8 1.4L1.4 12.6" stroke="#fff" stroke-width="2.3" fill="none"/></svg>
<div class="lbl" style="left:6.0px;top:802.0px;font-weight:bold;color:#151515">A</div>
<div class="box" style="left:27.5px;top:795.5px;width:558.5px;height:32.0px"></div>
<div class="lbl" style="left:34.0px;top:801.8px">CAN bus H</div>
<div class="tri" style="left:533.5px;top:809.0px"></div>
<div class="sb" style="left:556.0px;top:798.0px;width:27px;height:27px;border-color:#a58f80"></div>
<svg class="a" style="left:561.7px;top:808.9px" width="16" height="6" viewBox="0 0 16 6"><path d="M1.6 2.5h2.3M6.8 2.5h2.3M12 2.5h2.3" stroke="#806a5c" stroke-width="2.3" fill="none"/></svg>
<div class="box" style="left:590.0px;top:795.5px;width:942.0px;height:32.0px"></div>
<div class="lbl note" style="left:596.7px;top:801.8px">[Enter Channel Notes]</div>
<div class="box" style="left:1537px;top:795.5px;width:376px;height:32.0px"></div>
<div class="lbl" style="left:1544.0px;top:801.8px;font-size:15px">Unknown</div>
<div class="tri" style="left:1891.7px;top:809.0px"></div>
<div class="lbl" style="left:5.0px;top:837.2px;font-weight:bold;color:#151515">B</div>
<div class="box" style="left:26.5px;top:831.0px;width:558.5px;height:31.5px"></div>
<div class="lbl" style="left:32.5px;top:837.0px">Starter solenoid voltage</div>
<div class="tri" style="left:532.5px;top:844.2px"></div>
<div class="sb" style="left:555.0px;top:833.2px;width:27px;height:27px;border-color:#a58f80"></div>
<svg class="a" style="left:560.7px;top:844.1px" width="16" height="6" viewBox="0 0 16 6"><path d="M1.6 2.5h2.3M6.8 2.5h2.3M12 2.5h2.3" stroke="#806a5c" stroke-width="2.3" fill="none"/></svg>
<div class="box" style="left:589.0px;top:831.0px;width:943.0px;height:31.5px"></div>
<div class="lbl note" style="left:595.7px;top:837.0px">[Enter Channel Notes]</div>
<div class="box" style="left:1537px;top:831.0px;width:376px;height:31.5px"></div>
<div class="lbl" style="left:1545.3px;top:837.0px;font-size:15px">[Select Good/Bad/Unknown]</div>
<div class="tri" style="left:1891.7px;top:844.2px"></div>
<div class="lbl" style="left:5.0px;top:872.2px;font-weight:bold;color:#151515">C</div>
<div class="box" style="left:26.5px;top:866.0px;width:558.5px;height:31.5px"></div>
<div class="lbl" style="left:32.5px;top:872.0px">CAN bus L</div>
<div class="tri" style="left:532.5px;top:879.2px"></div>
<div class="sb" style="left:555.0px;top:868.2px;width:27px;height:27px;border-color:#a58f80"></div>
<svg class="a" style="left:560.7px;top:879.1px" width="16" height="6" viewBox="0 0 16 6"><path d="M1.6 2.5h2.3M6.8 2.5h2.3M12 2.5h2.3" stroke="#806a5c" stroke-width="2.3" fill="none"/></svg>
<div class="box" style="left:589.0px;top:866.0px;width:943.0px;height:31.5px"></div>
<div class="lbl note" style="left:595.7px;top:872.0px">[Enter Channel Notes]</div>
<div class="box" style="left:1537px;top:866.0px;width:376px;height:31.5px"></div>
<div class="lbl" style="left:1544.0px;top:872.0px;font-size:15px">Unknown</div>
<div class="tri" style="left:1891.7px;top:879.2px"></div>
<div class="a" style="left:0;top:897px;width:1915px;height:1.3px;background:#b5b0ac"></div>
<div class="a" style="left:0;top:898.3px;width:1915px;height:3px;background:#2b2b2b"></div>
<div class="a" style="left:242px;top:898.3px;width:61px;height:3px;background:#5d5d5d"></div>
</body></html>
